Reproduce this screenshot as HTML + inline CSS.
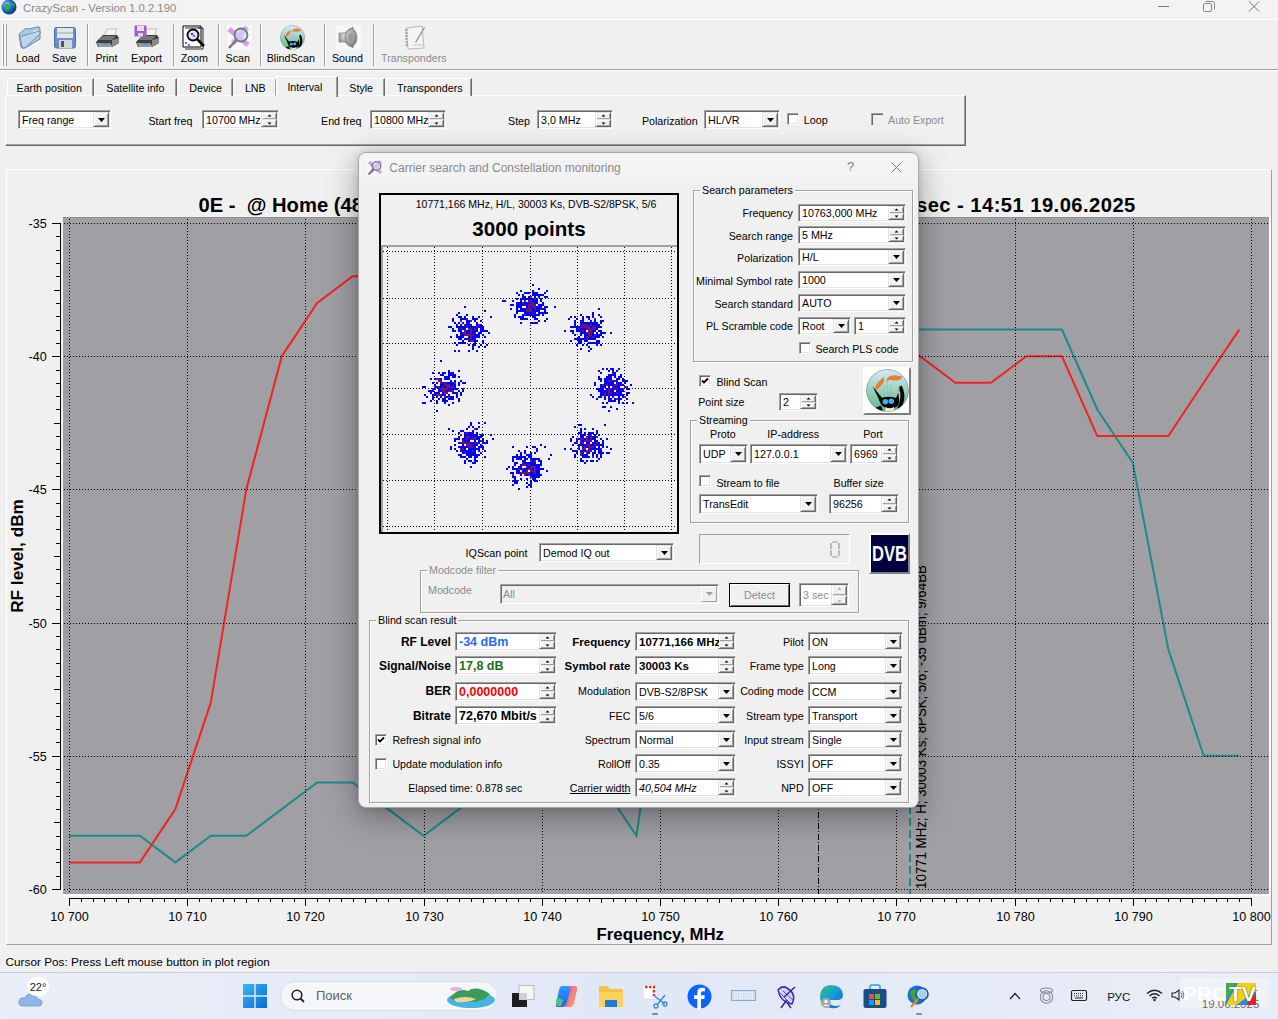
<!DOCTYPE html><html><head><meta charset="utf-8"><style>
html,body{margin:0;padding:0;width:1278px;height:1019px;overflow:hidden;background:#f0f0f0;font-family:"Liberation Sans", sans-serif;}
.t{position:absolute;white-space:nowrap;font-family:"Liberation Sans", sans-serif;}
.b{position:absolute;box-sizing:border-box;}
svg.b{overflow:visible}
</style></head><body>
<div class="b" style="left:0px;top:0px;width:1278px;height:19px;background:#f3f3f3"></div>
<svg class="b" style="left:1px;top:-1px" width="16" height="16"><defs><radialGradient id="gl" cx="35%" cy="35%" r="70%"><stop offset="0" stop-color="#9fd4ff"/><stop offset="0.5" stop-color="#1c6fc9"/><stop offset="1" stop-color="#0a3a80"/></radialGradient></defs><circle cx="8" cy="8" r="7.5" fill="url(#gl)"/><path d="M3 6Q5 4 7 5T9 8Q8 11 6 12Q4 10 3 6Z" fill="#3aa83a"/><path d="M10 3Q13 4 14 7Q12 8 11 6Z" fill="#3aa83a"/></svg>
<div class="t" style="top:0.5px;font-size:11.3px;line-height:14px;color:#8a8a8a;left:23.0px;">CrazyScan - Version 1.0.2.190</div>
<svg class="b" style="left:1150px;top:0" width="120" height="14"><path d="M8 6.5H19" stroke="#777" stroke-width="1"/><rect x="53.5" y="3.5" width="8" height="8" rx="1.5" fill="none" stroke="#888"/><path d="M55.5 1.5H62.5Q64.5 1.5 64.5 3.5V9.5" fill="none" stroke="#888"/><path d="M99 1.5L109 11.5M109 1.5L99 11.5" stroke="#777" stroke-width="1"/></svg>
<div class="b" style="left:0px;top:19px;width:1278px;height:1px;background:#fff"></div>
<div class="b" style="left:0px;top:69px;width:1278px;height:1px;background:#a0a0a0"></div>
<div class="b" style="left:0px;top:70px;width:1278px;height:1px;background:#fff"></div>
<div class="b" style="left:2px;top:24px;width:2px;height:42px;border-left:1px solid #fff;border-right:1px solid #a0a0a0"></div>
<div class="b" style="left:5px;top:24px;width:2px;height:42px;border-left:1px solid #fff;border-right:1px solid #a0a0a0"></div>
<div class="b" style="left:87px;top:24px;width:2px;height:42px;border-left:1px solid #a0a0a0;border-right:1px solid #fff"></div>
<div class="b" style="left:173px;top:24px;width:2px;height:42px;border-left:1px solid #a0a0a0;border-right:1px solid #fff"></div>
<div class="b" style="left:218px;top:24px;width:2px;height:42px;border-left:1px solid #a0a0a0;border-right:1px solid #fff"></div>
<div class="b" style="left:260px;top:24px;width:2px;height:42px;border-left:1px solid #a0a0a0;border-right:1px solid #fff"></div>
<div class="b" style="left:324px;top:24px;width:2px;height:42px;border-left:1px solid #a0a0a0;border-right:1px solid #fff"></div>
<div class="b" style="left:373px;top:24px;width:2px;height:42px;border-left:1px solid #a0a0a0;border-right:1px solid #fff"></div>
<div class="t" style="top:51.0px;font-size:10.7px;line-height:14px;color:#000;left:27.8px;transform:translateX(-50%);">Load</div>
<div class="t" style="top:51.0px;font-size:10.7px;line-height:14px;color:#000;left:64.3px;transform:translateX(-50%);">Save</div>
<div class="t" style="top:51.0px;font-size:10.7px;line-height:14px;color:#000;left:106.4px;transform:translateX(-50%);">Print</div>
<div class="t" style="top:51.0px;font-size:10.7px;line-height:14px;color:#000;left:146.5px;transform:translateX(-50%);">Export</div>
<div class="t" style="top:51.0px;font-size:10.7px;line-height:14px;color:#000;left:194.3px;transform:translateX(-50%);">Zoom</div>
<div class="t" style="top:51.0px;font-size:10.7px;line-height:14px;color:#000;left:237.8px;transform:translateX(-50%);">Scan</div>
<div class="t" style="top:51.0px;font-size:10.7px;line-height:14px;color:#000;left:290.8px;transform:translateX(-50%);">BlindScan</div>
<div class="t" style="top:51.0px;font-size:10.7px;line-height:14px;color:#000;left:347.4px;transform:translateX(-50%);">Sound</div>
<div class="t" style="top:51.0px;font-size:10.7px;line-height:14px;color:#8c8c8c;left:413.8px;transform:translateX(-50%);">Transponders</div>
<svg class="b" style="left:17px;top:25px" width="25" height="25" viewBox="0 0 25 25"><path d="M2 9L8 4Q10 3 12 4L20 2Q23 1 23 4L23 14L8 23Q5 24 4 22Z" fill="#a9c9e4" stroke="#6b8aa6" stroke-width="1"/><path d="M6 12L18 5Q21 4 22 6L10 14Z" fill="#fff" stroke="#9ab" stroke-width="0.6"/><path d="M3 13Q3 11 5 11L22 6Q24 6 23 9L9 22Q7 24 5 22Z" fill="#b9d6ee" stroke="#6d8ca8" stroke-width="1"/></svg>
<svg class="b" style="left:54px;top:27px" width="22" height="22" viewBox="0 0 22 22"><rect x="0.5" y="0.5" width="21" height="20.5" rx="2" fill="#6a8fd4" stroke="#5a6f8f"/><rect x="3" y="1" width="16" height="10" fill="#e2e6ea"/><rect x="3" y="5" width="16" height="2" fill="#b8c4d0"/><rect x="5" y="13" width="13" height="8" fill="#d6d6d6"/><rect x="7" y="14" width="3" height="6" fill="#555"/></svg>
<svg class="b" style="left:95px;top:28px" width="25" height="20" viewBox="0 0 25 20"><path d="M9 8L12 1H22L19 9Z" fill="#f4f4f4" stroke="#aaa" stroke-width="0.7"/><path d="M1 14L8 7H22L24 10V15L17 19H3Z" fill="#3d3d3d"/><path d="M3 12L8 8H21L17 12Z" fill="#777"/><path d="M2 15H15L18 19H4Z" fill="#9a9a9a"/><path d="M5 16L14 15L12 17Z" fill="#1e90ff"/><path d="M17 12L24 10V15L17 19Z" fill="#888"/></svg>
<svg class="b" style="left:135px;top:28px" width="25" height="20" viewBox="0 0 25 20"><path d="M9 8L12 1H22L19 9Z" fill="#f4f4f4" stroke="#aaa" stroke-width="0.7"/><path d="M1 14L8 7H22L24 10V15L17 19H3Z" fill="#3d3d3d"/><path d="M3 12L8 8H21L17 12Z" fill="#777"/><path d="M2 15H15L18 19H4Z" fill="#9a9a9a"/><path d="M5 16L14 15L12 17Z" fill="#1e90ff"/><path d="M17 12L24 10V15L17 19Z" fill="#888"/></svg>
<svg class="b" style="left:134px;top:25px" width="13" height="12" viewBox="0 0 13 12"><rect x="0.5" y="0.5" width="12" height="11" fill="#a45cc8"/><rect x="3" y="1" width="7" height="5" fill="#e8e0ee"/><rect x="4" y="8" width="5" height="3.5" fill="#d8d8d8"/></svg>
<svg class="b" style="left:182px;top:25px" width="26" height="26" viewBox="0 0 26 26"><path d="M1 1H19V22H1Z" fill="#fff" stroke="#000" stroke-width="1"/><path d="M3 3H21V24H3" fill="none" stroke="#000" stroke-width="0.8"/><circle cx="11" cy="10" r="5.5" fill="#dfe8ff" stroke="#000" stroke-width="1.8"/><path d="M15 14L22 21" stroke="#000" stroke-width="2.5"/><circle cx="10" cy="9" r="1.2" fill="#2a36ff"/><circle cx="12" cy="11" r="1" fill="#2a36ff"/><circle cx="4" cy="18" r="1" fill="#2a36ff"/><circle cx="7" cy="20" r="1" fill="#2a36ff"/><circle cx="17" cy="3" r="1" fill="#2a36ff"/></svg>
<svg class="b" style="left:227px;top:25px" width="25" height="25" viewBox="0 0 25 25"><rect x="0" y="0" width="25" height="25" fill="#f8f8f8"/><path d="M2 4L21 20" stroke="#d69cf0" stroke-width="5"/><path d="M20 2L6 18" stroke="#d69cf0" stroke-width="5" opacity="0.8"/><circle cx="14" cy="10" r="6.5" fill="#c8d8f0" fill-opacity="0.6" stroke="#777" stroke-width="1.8"/><path d="M9.5 15L2 23" stroke="#777" stroke-width="2.5"/></svg>
<svg class="b" style="left:280px;top:25px" width="25" height="25" viewBox="0 0 25 25"><g transform="scale(0.625)"><defs><linearGradient id="fl280" x1="0" y1="0" x2="0" y2="1"><stop offset="0" stop-color="#d2ecfb"/><stop offset="0.45" stop-color="#9fd4c4"/><stop offset="1" stop-color="#58b884"/></linearGradient><clipPath id="fc280"><circle cx="20" cy="20" r="19.5"/></clipPath></defs><circle cx="20" cy="20" r="19.5" fill="url(#fl280)" stroke="#666" stroke-width="0.5"/><g clip-path="url(#fc280)"><path d="M20 8Q25 4 32 7L34 6L33 9Q28 12 22 10L19 12Z" fill="#f07a3a"/><path d="M8 19Q9 13 15 9L16 7L17 11Q15 16 9 20Z" fill="#f07a3a"/><path d="M31 15Q34 18 33 22L30 21Z" fill="#f07a3a"/><path d="M6 16L15 27L13 30Z" fill="#000"/><path d="M12 28Q20 24 28 27L30 22L31 30Q30 37 22 37Q14 37 12 28Z" fill="#000"/><path d="M33 15Q38 24 34 34L31 38L29 36Q34 28 31 17Z" fill="#000"/><path d="M9 36L14 34L16 40H8Z" fill="#000"/><path d="M18 35Q22 38 26 35L26 41H18Z" fill="#f4f0b8"/><circle cx="18" cy="30.5" r="2.6" fill="#3ab0f0"/><circle cx="23.5" cy="30" r="2.6" fill="#3ab0f0"/><path d="M20 12V24M23 14V25M17 15V25" stroke="#8ab" stroke-width="0.6" opacity="0.6"/></g></g></svg>
<svg class="b" style="left:336px;top:25px" width="25" height="25" viewBox="0 0 25 25"><rect x="0" y="0" width="25" height="25" fill="#f8f8f8"/><defs><radialGradient id="spk" cx="40%" cy="40%" r="60%"><stop offset="0" stop-color="#e0e0e0"/><stop offset="1" stop-color="#7a7a7a"/></radialGradient></defs><path d="M3 8H9L17 2V23L9 17H3Z" fill="url(#spk)" stroke="#888" stroke-width="0.8"/><ellipse cx="15" cy="12.5" rx="6" ry="9" fill="url(#spk)" stroke="#888" stroke-width="0.8"/><ellipse cx="15" cy="12.5" rx="3" ry="5" fill="#9a9a9a"/></svg>
<svg class="b" style="left:403px;top:25px" width="26" height="25" viewBox="0 0 26 25"><path d="M3 3L19 1L21 23L5 24Z" fill="#f4f4f4" stroke="#aaa" stroke-width="0.8"/><path d="M2 5H5M2 8H5M2 11H5M2 14H5M2 17H5M2 20H5" stroke="#888" stroke-width="1"/><path d="M12 17L21 2L22 3L13 18Z" fill="#999"/><path d="M10 20H20" stroke="#bbb" stroke-width="0.8"/></svg>
<div class="b" style="left:5px;top:95px;width:961px;height:51px;border:1px solid;border-color:#fff #696969 #696969 #fff;box-shadow:inset -1px -1px #a0a0a0"></div>
<div class="b" style="left:7px;top:78px;width:87px;height:18px;border-top:1px solid #fff;border-left:1px solid #fff;border-right:1px solid #696969;box-shadow:inset -1px 0 #a0a0a0"></div>
<div class="t" style="top:81.0px;font-size:10.7px;line-height:14px;color:#000;left:16.5px;">Earth position</div>
<div class="b" style="left:94px;top:78px;width:83px;height:18px;border-top:1px solid #fff;border-left:1px solid #fff;border-right:1px solid #696969;box-shadow:inset -1px 0 #a0a0a0"></div>
<div class="t" style="top:81.0px;font-size:10.7px;line-height:14px;color:#000;left:106.3px;">Satellite info</div>
<div class="b" style="left:177px;top:78px;width:56px;height:18px;border-top:1px solid #fff;border-left:1px solid #fff;border-right:1px solid #696969;box-shadow:inset -1px 0 #a0a0a0"></div>
<div class="t" style="top:81.0px;font-size:10.7px;line-height:14px;color:#000;left:189.3px;">Device</div>
<div class="b" style="left:233px;top:78px;width:44px;height:18px;border-top:1px solid #fff;border-left:1px solid #fff;border-right:1px solid #696969;box-shadow:inset -1px 0 #a0a0a0"></div>
<div class="t" style="top:81.0px;font-size:10.7px;line-height:14px;color:#000;left:244.9px;">LNB</div>
<div class="b" style="left:337px;top:78px;width:48px;height:18px;border-top:1px solid #fff;border-left:1px solid #fff;border-right:1px solid #696969;box-shadow:inset -1px 0 #a0a0a0"></div>
<div class="t" style="top:81.0px;font-size:10.7px;line-height:14px;color:#000;left:349.3px;">Style</div>
<div class="b" style="left:385px;top:78px;width:87px;height:18px;border-top:1px solid #fff;border-left:1px solid #fff;border-right:1px solid #696969;box-shadow:inset -1px 0 #a0a0a0"></div>
<div class="t" style="top:81.0px;font-size:10.7px;line-height:14px;color:#000;left:397.0px;">Transponders</div>
<div class="b" style="left:276px;top:76px;width:62px;height:21px;background:#f0f0f0;border-top:1px solid #fff;border-left:1px solid #fff;border-right:1px solid #696969;box-shadow:inset -1px 0 #a0a0a0"></div>
<div class="t" style="top:80.0px;font-size:10.7px;line-height:14px;color:#000;left:287.4px;">Interval</div>
<div class="b" style="left:18px;top:110px;width:93px;height:19px;background:#fff;border:1px solid;border-color:#a0a0a0 #fff #fff #a0a0a0;box-shadow:inset 1px 1px #696969,inset -1px -1px #e3e3e3"></div>
<div class="b" style="left:93px;top:112px;width:16px;height:15px;background:#f0f0f0;border:1px solid;border-color:#e3e3e3 #696969 #696969 #e3e3e3;box-shadow:inset 1px 1px #fff,inset -1px -1px #a0a0a0"></div>
<svg class="b" style="left:97.5px;top:117.5px" width="7" height="4"><path d="M0 0H7L3.5 4Z" fill="#000"/></svg>
<div class="t" style="top:112.5px;font-size:10.7px;line-height:14px;color:#000;left:22.0px;">Freq range</div>
<div class="t" style="top:113.5px;font-size:10.7px;line-height:14px;color:#000;left:148.4px;">Start freq</div>
<div class="b" style="left:202px;top:110px;width:77px;height:19px;background:#fff;border:1px solid;border-color:#a0a0a0 #fff #fff #a0a0a0;box-shadow:inset 1px 1px #696969,inset -1px -1px #e3e3e3"></div>
<div class="b" style="left:261px;top:112px;width:16px;height:8px;background:#f0f0f0;border:1px solid;border-color:#e3e3e3 #696969 #696969 #e3e3e3;box-shadow:inset 1px 1px #fff,inset -1px -1px #a0a0a0"></div>
<div class="b" style="left:261px;top:119px;width:16px;height:8px;background:#f0f0f0;border:1px solid;border-color:#e3e3e3 #696969 #696969 #e3e3e3;box-shadow:inset 1px 1px #fff,inset -1px -1px #a0a0a0"></div>
<svg class="b" style="left:267px;top:114px" width="5" height="11"><path d="M2.5 0.5L4.5 2.5H0.5Z" fill="#000"/><path d="M0.5 8.5H4.5L2.5 10.5Z" fill="#000"/></svg>
<div class="t" style="top:112.5px;font-size:10.7px;line-height:14px;color:#000;left:206.0px;">10700 MHz</div>
<div class="t" style="top:113.5px;font-size:10.7px;line-height:14px;color:#000;left:321.0px;">End freq</div>
<div class="b" style="left:370px;top:110px;width:76px;height:19px;background:#fff;border:1px solid;border-color:#a0a0a0 #fff #fff #a0a0a0;box-shadow:inset 1px 1px #696969,inset -1px -1px #e3e3e3"></div>
<div class="b" style="left:428px;top:112px;width:16px;height:8px;background:#f0f0f0;border:1px solid;border-color:#e3e3e3 #696969 #696969 #e3e3e3;box-shadow:inset 1px 1px #fff,inset -1px -1px #a0a0a0"></div>
<div class="b" style="left:428px;top:119px;width:16px;height:8px;background:#f0f0f0;border:1px solid;border-color:#e3e3e3 #696969 #696969 #e3e3e3;box-shadow:inset 1px 1px #fff,inset -1px -1px #a0a0a0"></div>
<svg class="b" style="left:434px;top:114px" width="5" height="11"><path d="M2.5 0.5L4.5 2.5H0.5Z" fill="#000"/><path d="M0.5 8.5H4.5L2.5 10.5Z" fill="#000"/></svg>
<div class="t" style="top:112.5px;font-size:10.7px;line-height:14px;color:#000;left:374.0px;">10800 MHz</div>
<div class="t" style="top:113.5px;font-size:10.7px;line-height:14px;color:#000;left:508.0px;">Step</div>
<div class="b" style="left:537px;top:110px;width:76px;height:19px;background:#fff;border:1px solid;border-color:#a0a0a0 #fff #fff #a0a0a0;box-shadow:inset 1px 1px #696969,inset -1px -1px #e3e3e3"></div>
<div class="b" style="left:595px;top:112px;width:16px;height:8px;background:#f0f0f0;border:1px solid;border-color:#e3e3e3 #696969 #696969 #e3e3e3;box-shadow:inset 1px 1px #fff,inset -1px -1px #a0a0a0"></div>
<div class="b" style="left:595px;top:119px;width:16px;height:8px;background:#f0f0f0;border:1px solid;border-color:#e3e3e3 #696969 #696969 #e3e3e3;box-shadow:inset 1px 1px #fff,inset -1px -1px #a0a0a0"></div>
<svg class="b" style="left:601px;top:114px" width="5" height="11"><path d="M2.5 0.5L4.5 2.5H0.5Z" fill="#000"/><path d="M0.5 8.5H4.5L2.5 10.5Z" fill="#000"/></svg>
<div class="t" style="top:112.5px;font-size:10.7px;line-height:14px;color:#000;left:541.0px;">3,0 MHz</div>
<div class="t" style="top:113.5px;font-size:10.7px;line-height:14px;color:#000;left:641.9px;">Polarization</div>
<div class="b" style="left:704px;top:110px;width:76px;height:19px;background:#fff;border:1px solid;border-color:#a0a0a0 #fff #fff #a0a0a0;box-shadow:inset 1px 1px #696969,inset -1px -1px #e3e3e3"></div>
<div class="b" style="left:762px;top:112px;width:16px;height:15px;background:#f0f0f0;border:1px solid;border-color:#e3e3e3 #696969 #696969 #e3e3e3;box-shadow:inset 1px 1px #fff,inset -1px -1px #a0a0a0"></div>
<svg class="b" style="left:766.5px;top:117.5px" width="7" height="4"><path d="M0 0H7L3.5 4Z" fill="#000"/></svg>
<div class="t" style="top:112.5px;font-size:10.7px;line-height:14px;color:#000;left:708.0px;">HL/VR</div>
<div class="b" style="left:787px;top:113px;width:12px;height:12px;background:#fff;border:1px solid;border-color:#a0a0a0 #fff #fff #a0a0a0;box-shadow:inset 1px 1px #696969,inset -1px -1px #e3e3e3"></div>
<div class="t" style="top:112.5px;font-size:10.7px;line-height:14px;color:#000;left:803.8px;">Loop</div>
<div class="b" style="left:871px;top:113px;width:12px;height:12px;border-top:1px solid #a0a0a0;border-left:1px solid #a0a0a0;box-shadow:inset 1px 1px #696969"></div>
<div class="t" style="top:112.5px;font-size:10.7px;line-height:14px;color:#8c8c8c;left:888.0px;">Auto Export</div>
<div class="b" style="left:6px;top:169px;width:1266px;height:776px;border:1px solid;border-color:#fff #a0a0a0 #a0a0a0 #fff"></div>
<svg class="b" style="left:0;top:0" width="1278" height="1019" shape-rendering="crispEdges"><rect x="63" y="217" width="1206" height="677" fill="#a09fa4"/><rect x="63" y="217" width="1206" height="1" fill="#8f8e93"/><rect x="63" y="894" width="1208" height="2" fill="#ffffff"/><rect x="1269" y="217" width="2" height="679" fill="#ffffff"/><polyline points="69.0,835.7 104.5,835.7 139.9,835.7 175.4,862.4 210.8,835.7 246.3,835.7 281.8,809.1 317.2,782.4 352.7,782.4 388.1,809.1 423.6,835.7 459.1,809.1 494.5,782.4 530.0,755.8 565.4,622.6 600.9,782.4 636.4,835.7 671.8,596.0 707.3,409.5 742.7,356.2 778.2,329.6 813.7,329.6 849.1,329.6 884.6,329.6 920.0,329.6 955.5,329.6 991.0,329.6 1026.4,329.6 1061.9,329.6 1097.3,409.5 1132.8,462.8 1168.3,649.2 1203.7,755.8 1239.2,755.8" fill="none" stroke="#1e8a8a" stroke-width="2" shape-rendering="geometricPrecision" stroke-linejoin="miter"/><polyline points="69.0,862.4 104.5,862.4 139.9,862.4 175.4,809.1 210.8,702.5 246.3,489.4 281.8,356.2 317.2,302.9 352.7,276.3 388.1,276.3 423.6,276.3 459.1,276.3 494.5,276.3 530.0,276.3 565.4,276.3 600.9,276.3 636.4,302.9 671.8,302.9 707.3,302.9 742.7,302.9 778.2,302.9 813.7,302.9 849.1,302.9 884.6,329.6 920.0,356.2 955.5,382.8 991.0,382.8 1026.4,356.2 1061.9,356.2 1097.3,436.1 1132.8,436.1 1168.3,436.1 1203.7,382.8 1239.2,329.6" fill="none" stroke="#f02222" stroke-width="2" shape-rendering="geometricPrecision" stroke-linejoin="miter"/><line x1="818.5" y1="218" x2="818.5" y2="894" stroke="#000" stroke-width="1" stroke-dasharray="6 2 1 2"/><line x1="910" y1="218" x2="910" y2="894" stroke="#1e8a8a" stroke-width="2" stroke-dasharray="8 4"/><text x="0" y="0" transform="translate(925.9,889) rotate(-90) scale(0.92,1)" font-family="Liberation Sans" font-size="14.5" fill="#000" shape-rendering="geometricPrecision" textLength="352" lengthAdjust="spacingAndGlyphs">10771 MHz; H; 30003 Ks; 8PSK; 5/6; -35 dBm; 9/64BB</text><line x1="69.5" y1="219" x2="69.5" y2="894" stroke="#000" stroke-width="1" stroke-dasharray="1 2"/><line x1="187.5" y1="219" x2="187.5" y2="894" stroke="#000" stroke-width="1" stroke-dasharray="1 2"/><line x1="305.5" y1="219" x2="305.5" y2="894" stroke="#000" stroke-width="1" stroke-dasharray="1 2"/><line x1="424.5" y1="219" x2="424.5" y2="894" stroke="#000" stroke-width="1" stroke-dasharray="1 2"/><line x1="542.5" y1="219" x2="542.5" y2="894" stroke="#000" stroke-width="1" stroke-dasharray="1 2"/><line x1="660.5" y1="219" x2="660.5" y2="894" stroke="#000" stroke-width="1" stroke-dasharray="1 2"/><line x1="778.5" y1="219" x2="778.5" y2="894" stroke="#000" stroke-width="1" stroke-dasharray="1 2"/><line x1="896.5" y1="219" x2="896.5" y2="894" stroke="#000" stroke-width="1" stroke-dasharray="1 2"/><line x1="1015.5" y1="219" x2="1015.5" y2="894" stroke="#000" stroke-width="1" stroke-dasharray="1 2"/><line x1="1133.5" y1="219" x2="1133.5" y2="894" stroke="#000" stroke-width="1" stroke-dasharray="1 2"/><line x1="1251.5" y1="219" x2="1251.5" y2="894" stroke="#000" stroke-width="1" stroke-dasharray="1 2"/><line x1="64" y1="223.5" x2="1268" y2="223.5" stroke="#000" stroke-width="1" stroke-dasharray="1 2"/><line x1="64" y1="356.5" x2="1268" y2="356.5" stroke="#000" stroke-width="1" stroke-dasharray="1 2"/><line x1="64" y1="489.5" x2="1268" y2="489.5" stroke="#000" stroke-width="1" stroke-dasharray="1 2"/><line x1="64" y1="623.5" x2="1268" y2="623.5" stroke="#000" stroke-width="1" stroke-dasharray="1 2"/><line x1="64" y1="756.5" x2="1268" y2="756.5" stroke="#000" stroke-width="1" stroke-dasharray="1 2"/><line x1="64" y1="889.5" x2="1268" y2="889.5" stroke="#000" stroke-width="1" stroke-dasharray="1 2"/><rect x="60" y="223" width="1" height="667" fill="#000"/><rect x="52" y="223" width="8" height="1" fill="#000"/><rect x="56" y="236" width="4" height="1" fill="#000"/><rect x="56" y="250" width="4" height="1" fill="#000"/><rect x="56" y="263" width="4" height="1" fill="#000"/><rect x="56" y="276" width="4" height="1" fill="#000"/><rect x="54" y="290" width="6" height="1" fill="#000"/><rect x="56" y="303" width="4" height="1" fill="#000"/><rect x="56" y="316" width="4" height="1" fill="#000"/><rect x="56" y="330" width="4" height="1" fill="#000"/><rect x="56" y="343" width="4" height="1" fill="#000"/><rect x="52" y="356" width="8" height="1" fill="#000"/><rect x="56" y="370" width="4" height="1" fill="#000"/><rect x="56" y="383" width="4" height="1" fill="#000"/><rect x="56" y="396" width="4" height="1" fill="#000"/><rect x="56" y="409" width="4" height="1" fill="#000"/><rect x="54" y="423" width="6" height="1" fill="#000"/><rect x="56" y="436" width="4" height="1" fill="#000"/><rect x="56" y="449" width="4" height="1" fill="#000"/><rect x="56" y="463" width="4" height="1" fill="#000"/><rect x="56" y="476" width="4" height="1" fill="#000"/><rect x="52" y="489" width="8" height="1" fill="#000"/><rect x="56" y="503" width="4" height="1" fill="#000"/><rect x="56" y="516" width="4" height="1" fill="#000"/><rect x="56" y="529" width="4" height="1" fill="#000"/><rect x="56" y="543" width="4" height="1" fill="#000"/><rect x="54" y="556" width="6" height="1" fill="#000"/><rect x="56" y="569" width="4" height="1" fill="#000"/><rect x="56" y="583" width="4" height="1" fill="#000"/><rect x="56" y="596" width="4" height="1" fill="#000"/><rect x="56" y="609" width="4" height="1" fill="#000"/><rect x="52" y="623" width="8" height="1" fill="#000"/><rect x="56" y="636" width="4" height="1" fill="#000"/><rect x="56" y="649" width="4" height="1" fill="#000"/><rect x="56" y="663" width="4" height="1" fill="#000"/><rect x="56" y="676" width="4" height="1" fill="#000"/><rect x="54" y="689" width="6" height="1" fill="#000"/><rect x="56" y="703" width="4" height="1" fill="#000"/><rect x="56" y="716" width="4" height="1" fill="#000"/><rect x="56" y="729" width="4" height="1" fill="#000"/><rect x="56" y="742" width="4" height="1" fill="#000"/><rect x="52" y="756" width="8" height="1" fill="#000"/><rect x="56" y="769" width="4" height="1" fill="#000"/><rect x="56" y="782" width="4" height="1" fill="#000"/><rect x="56" y="796" width="4" height="1" fill="#000"/><rect x="56" y="809" width="4" height="1" fill="#000"/><rect x="54" y="822" width="6" height="1" fill="#000"/><rect x="56" y="836" width="4" height="1" fill="#000"/><rect x="56" y="849" width="4" height="1" fill="#000"/><rect x="56" y="862" width="4" height="1" fill="#000"/><rect x="56" y="876" width="4" height="1" fill="#000"/><rect x="52" y="889" width="8" height="1" fill="#000"/><rect x="69" y="898" width="1183" height="1" fill="#000"/><rect x="69" y="898" width="1" height="8" fill="#000"/><rect x="81" y="898" width="1" height="4" fill="#000"/><rect x="93" y="898" width="1" height="4" fill="#000"/><rect x="104" y="898" width="1" height="4" fill="#000"/><rect x="116" y="898" width="1" height="4" fill="#000"/><rect x="128" y="898" width="1" height="5" fill="#000"/><rect x="140" y="898" width="1" height="4" fill="#000"/><rect x="152" y="898" width="1" height="4" fill="#000"/><rect x="164" y="898" width="1" height="4" fill="#000"/><rect x="175" y="898" width="1" height="4" fill="#000"/><rect x="187" y="898" width="1" height="8" fill="#000"/><rect x="199" y="898" width="1" height="4" fill="#000"/><rect x="211" y="898" width="1" height="4" fill="#000"/><rect x="223" y="898" width="1" height="4" fill="#000"/><rect x="234" y="898" width="1" height="4" fill="#000"/><rect x="246" y="898" width="1" height="5" fill="#000"/><rect x="258" y="898" width="1" height="4" fill="#000"/><rect x="270" y="898" width="1" height="4" fill="#000"/><rect x="282" y="898" width="1" height="4" fill="#000"/><rect x="294" y="898" width="1" height="4" fill="#000"/><rect x="305" y="898" width="1" height="8" fill="#000"/><rect x="317" y="898" width="1" height="4" fill="#000"/><rect x="329" y="898" width="1" height="4" fill="#000"/><rect x="341" y="898" width="1" height="4" fill="#000"/><rect x="353" y="898" width="1" height="4" fill="#000"/><rect x="365" y="898" width="1" height="5" fill="#000"/><rect x="376" y="898" width="1" height="4" fill="#000"/><rect x="388" y="898" width="1" height="4" fill="#000"/><rect x="400" y="898" width="1" height="4" fill="#000"/><rect x="412" y="898" width="1" height="4" fill="#000"/><rect x="424" y="898" width="1" height="8" fill="#000"/><rect x="435" y="898" width="1" height="4" fill="#000"/><rect x="447" y="898" width="1" height="4" fill="#000"/><rect x="459" y="898" width="1" height="4" fill="#000"/><rect x="471" y="898" width="1" height="4" fill="#000"/><rect x="483" y="898" width="1" height="5" fill="#000"/><rect x="495" y="898" width="1" height="4" fill="#000"/><rect x="506" y="898" width="1" height="4" fill="#000"/><rect x="518" y="898" width="1" height="4" fill="#000"/><rect x="530" y="898" width="1" height="4" fill="#000"/><rect x="542" y="898" width="1" height="8" fill="#000"/><rect x="554" y="898" width="1" height="4" fill="#000"/><rect x="565" y="898" width="1" height="4" fill="#000"/><rect x="577" y="898" width="1" height="4" fill="#000"/><rect x="589" y="898" width="1" height="4" fill="#000"/><rect x="601" y="898" width="1" height="5" fill="#000"/><rect x="613" y="898" width="1" height="4" fill="#000"/><rect x="625" y="898" width="1" height="4" fill="#000"/><rect x="636" y="898" width="1" height="4" fill="#000"/><rect x="648" y="898" width="1" height="4" fill="#000"/><rect x="660" y="898" width="1" height="8" fill="#000"/><rect x="672" y="898" width="1" height="4" fill="#000"/><rect x="684" y="898" width="1" height="4" fill="#000"/><rect x="695" y="898" width="1" height="4" fill="#000"/><rect x="707" y="898" width="1" height="4" fill="#000"/><rect x="719" y="898" width="1" height="5" fill="#000"/><rect x="731" y="898" width="1" height="4" fill="#000"/><rect x="743" y="898" width="1" height="4" fill="#000"/><rect x="755" y="898" width="1" height="4" fill="#000"/><rect x="766" y="898" width="1" height="4" fill="#000"/><rect x="778" y="898" width="1" height="8" fill="#000"/><rect x="790" y="898" width="1" height="4" fill="#000"/><rect x="802" y="898" width="1" height="4" fill="#000"/><rect x="814" y="898" width="1" height="4" fill="#000"/><rect x="825" y="898" width="1" height="4" fill="#000"/><rect x="837" y="898" width="1" height="5" fill="#000"/><rect x="849" y="898" width="1" height="4" fill="#000"/><rect x="861" y="898" width="1" height="4" fill="#000"/><rect x="873" y="898" width="1" height="4" fill="#000"/><rect x="885" y="898" width="1" height="4" fill="#000"/><rect x="896" y="898" width="1" height="8" fill="#000"/><rect x="908" y="898" width="1" height="4" fill="#000"/><rect x="920" y="898" width="1" height="4" fill="#000"/><rect x="932" y="898" width="1" height="4" fill="#000"/><rect x="944" y="898" width="1" height="4" fill="#000"/><rect x="956" y="898" width="1" height="5" fill="#000"/><rect x="967" y="898" width="1" height="4" fill="#000"/><rect x="979" y="898" width="1" height="4" fill="#000"/><rect x="991" y="898" width="1" height="4" fill="#000"/><rect x="1003" y="898" width="1" height="4" fill="#000"/><rect x="1015" y="898" width="1" height="8" fill="#000"/><rect x="1026" y="898" width="1" height="4" fill="#000"/><rect x="1038" y="898" width="1" height="4" fill="#000"/><rect x="1050" y="898" width="1" height="4" fill="#000"/><rect x="1062" y="898" width="1" height="4" fill="#000"/><rect x="1074" y="898" width="1" height="5" fill="#000"/><rect x="1086" y="898" width="1" height="4" fill="#000"/><rect x="1097" y="898" width="1" height="4" fill="#000"/><rect x="1109" y="898" width="1" height="4" fill="#000"/><rect x="1121" y="898" width="1" height="4" fill="#000"/><rect x="1133" y="898" width="1" height="8" fill="#000"/><rect x="1145" y="898" width="1" height="4" fill="#000"/><rect x="1156" y="898" width="1" height="4" fill="#000"/><rect x="1168" y="898" width="1" height="4" fill="#000"/><rect x="1180" y="898" width="1" height="4" fill="#000"/><rect x="1192" y="898" width="1" height="5" fill="#000"/><rect x="1204" y="898" width="1" height="4" fill="#000"/><rect x="1216" y="898" width="1" height="4" fill="#000"/><rect x="1227" y="898" width="1" height="4" fill="#000"/><rect x="1239" y="898" width="1" height="4" fill="#000"/><rect x="1251" y="898" width="1" height="8" fill="#000"/></svg>
<div class="t" style="top:217.2px;font-size:12.6px;line-height:14px;color:#000;right:1231.3px;">-35</div>
<div class="t" style="top:350.2px;font-size:12.6px;line-height:14px;color:#000;right:1231.3px;">-40</div>
<div class="t" style="top:483.2px;font-size:12.6px;line-height:14px;color:#000;right:1231.3px;">-45</div>
<div class="t" style="top:617.2px;font-size:12.6px;line-height:14px;color:#000;right:1231.3px;">-50</div>
<div class="t" style="top:750.2px;font-size:12.6px;line-height:14px;color:#000;right:1231.3px;">-55</div>
<div class="t" style="top:883.2px;font-size:12.6px;line-height:14px;color:#000;right:1231.3px;">-60</div>
<div class="t" style="top:909.5px;font-size:12.6px;line-height:14px;color:#000;left:69.5px;transform:translateX(-50%);">10 700</div>
<div class="t" style="top:909.5px;font-size:12.6px;line-height:14px;color:#000;left:187.5px;transform:translateX(-50%);">10 710</div>
<div class="t" style="top:909.5px;font-size:12.6px;line-height:14px;color:#000;left:305.5px;transform:translateX(-50%);">10 720</div>
<div class="t" style="top:909.5px;font-size:12.6px;line-height:14px;color:#000;left:424.5px;transform:translateX(-50%);">10 730</div>
<div class="t" style="top:909.5px;font-size:12.6px;line-height:14px;color:#000;left:542.5px;transform:translateX(-50%);">10 740</div>
<div class="t" style="top:909.5px;font-size:12.6px;line-height:14px;color:#000;left:660.5px;transform:translateX(-50%);">10 750</div>
<div class="t" style="top:909.5px;font-size:12.6px;line-height:14px;color:#000;left:778.5px;transform:translateX(-50%);">10 760</div>
<div class="t" style="top:909.5px;font-size:12.6px;line-height:14px;color:#000;left:896.5px;transform:translateX(-50%);">10 770</div>
<div class="t" style="top:909.5px;font-size:12.6px;line-height:14px;color:#000;left:1015.5px;transform:translateX(-50%);">10 780</div>
<div class="t" style="top:909.5px;font-size:12.6px;line-height:14px;color:#000;left:1133.5px;transform:translateX(-50%);">10 790</div>
<div class="t" style="top:909.5px;font-size:12.6px;line-height:14px;color:#000;left:1251.5px;transform:translateX(-50%);">10 800</div>
<div class="t" style="top:926.0px;font-size:16.8px;line-height:18px;color:#000;font-weight:700;left:660.3px;transform:translateX(-50%);">Frequency, MHz</div>
<div class="t" style="left:17px;top:556px;font-size:17.2px;line-height:18px;font-weight:700;transform:translate(-50%,-50%) rotate(-90deg)">RF level, dBm</div>
<div class="t" style="top:194.0px;font-size:20.2px;line-height:22px;color:#000;font-weight:700;left:198.5px;">0E -&nbsp; @ Home (48.46N, 35.04E) - Scan time 39.1</div>
<div class="t" style="top:194.0px;font-size:20.2px;line-height:22px;color:#000;font-weight:700;right:142.2px;letter-spacing:0.45px">sec - 14:51 19.06.2025</div>
<div class="t" style="top:955.0px;font-size:11.8px;line-height:14px;color:#000;left:5.5px;">Cursor Pos: Press Left mouse button in plot region</div>
<div class="b" style="left:358px;top:152px;width:561px;height:656px;background:#f0f0f0;border:1px solid #a8a8a8;border-radius:8px;box-shadow:0 8px 32px rgba(0,0,0,0.36),0 0 6px rgba(0,0,0,0.12)"></div>
<div class="b" style="left:359px;top:153px;width:559px;height:30px;background:#f3f3f3;border-radius:7px 7px 0 0"></div>
<svg class="b" style="left:367px;top:159px" width="17" height="17" viewBox="0 0 17 17"><rect width="17" height="17" fill="#f8f8f8"/><path d="M2 3L14 14" stroke="#d69cf0" stroke-width="3.5"/><path d="M14 2L4 13" stroke="#d69cf0" stroke-width="3.5" opacity="0.8"/><circle cx="9.5" cy="7" r="4.3" fill="#c8d8f0" fill-opacity="0.6" stroke="#777" stroke-width="1.3"/><path d="M6.5 10.5L1.5 15.5" stroke="#777" stroke-width="1.8"/></svg>
<div class="t" style="top:160.6px;font-size:12px;line-height:14px;color:#8a8a8a;left:389.3px;">Carrier search and Constellation monitoring</div>
<div class="t" style="top:159.7px;font-size:13px;line-height:14px;color:#808080;left:850.7px;transform:translateX(-50%);">?</div>
<svg class="b" style="left:891px;top:162px" width="11" height="11" viewBox="0 0 11 11"><path d="M0.5 0.5L10.5 10.5M10.5 0.5L0.5 10.5" stroke="#777" stroke-width="1"/></svg>
<div class="b" style="left:379px;top:193px;width:300px;height:341px;border:2px solid #000;background:#f0f0f0"></div>
<div class="t" style="top:197.0px;font-size:10.5px;line-height:14px;color:#000;left:536.0px;transform:translateX(-50%);">10771,166 MHz, H/L, 30003 Ks, DVB-S2/8PSK, 5/6</div>
<div class="t" style="top:218.0px;font-size:20.6px;line-height:22px;color:#000;font-weight:700;left:529.0px;transform:translateX(-50%);">3000 points</div>
<div class="b" style="left:381px;top:245px;width:296px;height:287px;border-top:2px solid #a0a0a0;border-left:2px solid #a0a0a0"></div>
<svg class="b" style="left:0;top:0" width="1278" height="1019" shape-rendering="crispEdges"><line x1="387.5" y1="247" x2="387.5" y2="530" stroke="#000" stroke-width="1" stroke-dasharray="1 2"/><line x1="434.5" y1="247" x2="434.5" y2="530" stroke="#000" stroke-width="1" stroke-dasharray="1 2"/><line x1="482.5" y1="247" x2="482.5" y2="530" stroke="#000" stroke-width="1" stroke-dasharray="1 2"/><line x1="530.5" y1="247" x2="530.5" y2="530" stroke="#000" stroke-width="1" stroke-dasharray="1 2"/><line x1="577.5" y1="247" x2="577.5" y2="530" stroke="#000" stroke-width="1" stroke-dasharray="1 2"/><line x1="624.5" y1="247" x2="624.5" y2="530" stroke="#000" stroke-width="1" stroke-dasharray="1 2"/><line x1="671.5" y1="247" x2="671.5" y2="530" stroke="#000" stroke-width="1" stroke-dasharray="1 2"/><line x1="383" y1="251.5" x2="675" y2="251.5" stroke="#000" stroke-width="1" stroke-dasharray="1 2"/><line x1="383" y1="298.5" x2="675" y2="298.5" stroke="#000" stroke-width="1" stroke-dasharray="1 2"/><line x1="383" y1="343.5" x2="675" y2="343.5" stroke="#000" stroke-width="1" stroke-dasharray="1 2"/><line x1="383" y1="388.5" x2="675" y2="388.5" stroke="#000" stroke-width="1" stroke-dasharray="1 2"/><line x1="383" y1="434.5" x2="675" y2="434.5" stroke="#000" stroke-width="1" stroke-dasharray="1 2"/><line x1="383" y1="480.5" x2="675" y2="480.5" stroke="#000" stroke-width="1" stroke-dasharray="1 2"/><line x1="383" y1="526.5" x2="675" y2="526.5" stroke="#000" stroke-width="1" stroke-dasharray="1 2"/><path d="M604 386h2v2h-2zM596 448h2v2h-2zM536 468h2v2h-2zM472 444h2v2h-2zM430 392h2v2h-2zM516 292h2v2h-2zM592 438h2v2h-2zM464 456h2v2h-2zM592 332h2v2h-2zM584 454h2v2h-2zM472 432h2v2h-2zM452 328h2v2h-2zM592 330h2v2h-2zM600 394h2v2h-2zM592 452h2v2h-2zM538 470h2v2h-2zM470 432h2v2h-2zM448 382h2v2h-2zM466 320h2v2h-2zM598 314h2v2h-2zM600 390h2v2h-2zM598 448h2v2h-2zM512 446h2v2h-2zM472 436h2v2h-2zM478 332h2v2h-2zM532 310h2v2h-2zM600 334h2v2h-2zM574 454h2v2h-2zM454 438h2v2h-2zM520 318h2v2h-2zM614 392h2v2h-2zM588 452h2v2h-2zM480 326h2v2h-2zM518 306h2v2h-2zM624 380h2v2h-2zM598 434h2v2h-2zM478 450h2v2h-2zM618 392h2v2h-2zM602 446h2v2h-2zM468 450h2v2h-2zM484 310h2v2h-2zM520 308h2v2h-2zM546 470h2v2h-2zM448 326h2v2h-2zM538 296h2v2h-2zM618 400h2v2h-2zM574 442h2v2h-2zM478 422h2v2h-2zM452 376h2v2h-2zM474 318h2v2h-2zM532 316h2v2h-2zM618 388h2v2h-2zM586 456h2v2h-2zM536 464h2v2h-2zM490 434h2v2h-2zM452 384h2v2h-2zM576 318h2v2h-2zM616 380h2v2h-2zM580 432h2v2h-2zM538 472h2v2h-2zM480 436h2v2h-2zM444 378h2v2h-2zM474 342h2v2h-2zM522 318h2v2h-2zM596 398h2v2h-2zM480 434h2v2h-2zM452 398h2v2h-2zM480 328h2v2h-2zM570 440h2v2h-2zM512 472h2v2h-2zM530 314h2v2h-2zM598 342h2v2h-2zM606 394h2v2h-2zM572 436h2v2h-2zM544 306h2v2h-2zM592 338h2v2h-2zM610 378h2v2h-2zM582 452h2v2h-2zM514 462h2v2h-2zM476 448h2v2h-2zM518 302h2v2h-2zM606 382h2v2h-2zM576 442h2v2h-2zM518 470h2v2h-2zM450 446h2v2h-2zM438 372h2v2h-2zM512 300h2v2h-2zM590 326h2v2h-2zM618 394h2v2h-2zM472 426h2v2h-2zM450 396h2v2h-2zM544 292h2v2h-2zM590 348h2v2h-2zM602 442h2v2h-2zM532 474h2v2h-2zM522 304h2v2h-2zM594 330h2v2h-2zM606 380h2v2h-2zM608 452h2v2h-2zM532 446h2v2h-2zM474 446h2v2h-2zM458 390h2v2h-2zM514 314h2v2h-2zM622 402h2v2h-2zM576 438h2v2h-2zM460 394h2v2h-2zM542 314h2v2h-2zM602 336h2v2h-2zM606 390h2v2h-2zM570 438h2v2h-2zM528 312h2v2h-2zM588 324h2v2h-2zM586 446h2v2h-2zM468 432h2v2h-2zM448 394h2v2h-2zM472 328h2v2h-2zM572 330h2v2h-2zM578 424h2v2h-2zM520 478h2v2h-2zM438 390h2v2h-2zM472 332h2v2h-2zM542 312h2v2h-2zM626 394h2v2h-2zM466 452h2v2h-2zM468 350h2v2h-2zM540 304h2v2h-2zM588 350h2v2h-2zM610 394h2v2h-2zM472 452h2v2h-2zM476 334h2v2h-2zM604 382h2v2h-2zM588 432h2v2h-2zM524 450h2v2h-2zM464 448h2v2h-2zM544 310h2v2h-2zM596 322h2v2h-2zM610 374h2v2h-2zM594 452h2v2h-2zM512 466h2v2h-2zM430 378h2v2h-2zM464 318h2v2h-2zM576 440h2v2h-2zM520 458h2v2h-2zM448 374h2v2h-2zM460 330h2v2h-2zM618 390h2v2h-2zM526 446h2v2h-2zM612 380h2v2h-2zM464 432h2v2h-2zM526 306h2v2h-2zM630 384h2v2h-2zM596 444h2v2h-2zM536 448h2v2h-2zM462 444h2v2h-2zM448 404h2v2h-2zM536 314h2v2h-2zM616 378h2v2h-2zM530 482h2v2h-2zM534 312h2v2h-2zM582 344h2v2h-2zM626 388h2v2h-2zM538 460h2v2h-2zM438 392h2v2h-2zM480 330h2v2h-2zM524 312h2v2h-2zM584 462h2v2h-2zM430 400h2v2h-2zM480 320h2v2h-2zM518 294h2v2h-2zM596 326h2v2h-2zM612 384h2v2h-2zM528 456h2v2h-2zM526 318h2v2h-2zM608 382h2v2h-2zM580 442h2v2h-2zM474 460h2v2h-2zM490 316h2v2h-2zM610 390h2v2h-2zM512 460h2v2h-2zM468 434h2v2h-2zM436 392h2v2h-2zM536 308h2v2h-2zM602 388h2v2h-2zM458 382h2v2h-2zM542 308h2v2h-2zM594 324h2v2h-2zM612 388h2v2h-2zM574 456h2v2h-2zM534 452h2v2h-2zM474 442h2v2h-2zM458 328h2v2h-2zM542 302h2v2h-2zM580 320h2v2h-2zM602 390h2v2h-2zM530 484h2v2h-2zM464 438h2v2h-2zM532 308h2v2h-2zM450 380h2v2h-2zM542 304h2v2h-2zM600 388h2v2h-2zM582 446h2v2h-2zM518 450h2v2h-2zM534 294h2v2h-2zM618 386h2v2h-2zM530 480h2v2h-2zM464 462h2v2h-2zM520 290h2v2h-2zM616 408h2v2h-2zM482 434h2v2h-2zM440 360h2v2h-2zM536 322h2v2h-2zM528 466h2v2h-2zM590 322h2v2h-2zM620 390h2v2h-2zM530 474h2v2h-2zM470 442h2v2h-2zM432 394h2v2h-2zM612 370h2v2h-2zM584 450h2v2h-2zM538 464h2v2h-2zM468 456h2v2h-2zM442 392h2v2h-2zM482 330h2v2h-2zM540 300h2v2h-2zM612 396h2v2h-2zM606 438h2v2h-2zM522 470h2v2h-2zM460 446h2v2h-2zM472 318h2v2h-2zM536 294h2v2h-2zM532 478h2v2h-2zM454 388h2v2h-2zM458 350h2v2h-2zM546 290h2v2h-2zM586 334h2v2h-2zM620 392h2v2h-2zM444 372h2v2h-2zM534 300h2v2h-2zM612 382h2v2h-2zM536 480h2v2h-2zM424 402h2v2h-2zM534 296h2v2h-2zM598 390h2v2h-2zM596 430h2v2h-2zM454 384h2v2h-2zM536 300h2v2h-2zM586 344h2v2h-2zM616 386h2v2h-2zM578 438h2v2h-2zM536 306h2v2h-2zM442 384h2v2h-2zM474 340h2v2h-2zM524 310h2v2h-2zM580 348h2v2h-2zM608 396h2v2h-2zM582 450h2v2h-2zM544 446h2v2h-2zM466 446h2v2h-2zM486 330h2v2h-2zM516 312h2v2h-2zM574 338h2v2h-2zM598 444h2v2h-2zM516 454h2v2h-2zM478 448h2v2h-2zM512 304h2v2h-2zM594 336h2v2h-2zM618 368h2v2h-2zM548 458h2v2h-2zM450 382h2v2h-2zM600 396h2v2h-2zM466 314h2v2h-2zM434 392h2v2h-2zM460 332h2v2h-2zM614 374h2v2h-2zM524 468h2v2h-2zM474 448h2v2h-2zM466 330h2v2h-2zM586 316h2v2h-2zM580 444h2v2h-2zM484 422h2v2h-2zM442 372h2v2h-2zM476 350h2v2h-2zM510 308h2v2h-2zM616 370h2v2h-2zM594 446h2v2h-2zM528 462h2v2h-2zM446 382h2v2h-2zM452 330h2v2h-2zM580 330h2v2h-2zM596 460h2v2h-2zM520 452h2v2h-2zM476 454h2v2h-2zM452 392h2v2h-2zM536 298h2v2h-2zM574 322h2v2h-2zM632 402h2v2h-2zM478 442h2v2h-2zM436 396h2v2h-2zM598 370h2v2h-2zM474 444h2v2h-2zM534 310h2v2h-2zM620 388h2v2h-2zM592 448h2v2h-2zM464 440h2v2h-2zM480 344h2v2h-2zM596 336h2v2h-2zM622 378h2v2h-2zM538 468h2v2h-2zM480 324h2v2h-2zM530 322h2v2h-2zM596 332h2v2h-2zM472 442h2v2h-2zM458 330h2v2h-2zM584 336h2v2h-2zM628 392h2v2h-2zM590 432h2v2h-2zM542 468h2v2h-2zM580 340h2v2h-2zM608 374h2v2h-2zM520 464h2v2h-2zM470 434h2v2h-2zM442 398h2v2h-2zM530 306h2v2h-2zM612 368h2v2h-2zM588 436h2v2h-2zM532 462h2v2h-2zM470 460h2v2h-2zM458 312h2v2h-2zM516 308h2v2h-2zM582 316h2v2h-2zM600 392h2v2h-2zM484 450h2v2h-2zM482 340h2v2h-2zM608 378h2v2h-2zM584 432h2v2h-2zM536 470h2v2h-2zM460 454h2v2h-2zM484 336h2v2h-2zM546 296h2v2h-2zM592 334h2v2h-2zM596 432h2v2h-2zM518 456h2v2h-2zM468 324h2v2h-2zM526 314h2v2h-2zM610 400h2v2h-2zM476 434h2v2h-2zM452 388h2v2h-2zM456 336h2v2h-2zM522 316h2v2h-2zM582 328h2v2h-2zM470 422h2v2h-2zM454 330h2v2h-2zM534 314h2v2h-2zM578 342h2v2h-2zM610 406h2v2h-2zM524 458h2v2h-2zM456 392h2v2h-2zM464 316h2v2h-2zM580 334h2v2h-2zM614 386h2v2h-2zM588 442h2v2h-2zM530 472h2v2h-2zM476 438h2v2h-2zM432 398h2v2h-2zM516 304h2v2h-2zM588 318h2v2h-2zM596 456h2v2h-2zM520 456h2v2h-2zM446 376h2v2h-2zM474 336h2v2h-2zM534 302h2v2h-2zM590 336h2v2h-2zM590 448h2v2h-2zM482 328h2v2h-2zM546 318h2v2h-2zM532 476h2v2h-2zM458 338h2v2h-2zM526 298h2v2h-2zM618 396h2v2h-2zM576 452h2v2h-2zM534 462h2v2h-2zM458 436h2v2h-2zM438 388h2v2h-2zM532 294h2v2h-2zM594 320h2v2h-2zM582 454h2v2h-2zM472 430h2v2h-2zM462 334h2v2h-2zM580 314h2v2h-2zM506 468h2v2h-2zM478 446h2v2h-2zM478 326h2v2h-2zM538 312h2v2h-2zM576 326h2v2h-2zM600 386h2v2h-2zM592 436h2v2h-2zM512 476h2v2h-2zM472 454h2v2h-2zM434 394h2v2h-2zM484 346h2v2h-2zM576 450h2v2h-2zM470 456h2v2h-2zM452 382h2v2h-2zM472 344h2v2h-2zM596 340h2v2h-2zM530 486h2v2h-2zM462 452h2v2h-2zM450 374h2v2h-2zM526 304h2v2h-2zM616 382h2v2h-2zM482 442h2v2h-2zM466 338h2v2h-2zM520 310h2v2h-2zM626 380h2v2h-2zM600 450h2v2h-2zM538 458h2v2h-2zM478 454h2v2h-2zM488 332h2v2h-2zM526 302h2v2h-2zM614 400h2v2h-2zM476 456h2v2h-2zM434 378h2v2h-2zM460 316h2v2h-2zM534 292h2v2h-2zM592 342h2v2h-2zM600 384h2v2h-2zM572 450h2v2h-2zM520 306h2v2h-2zM572 326h2v2h-2zM628 388h2v2h-2zM520 454h2v2h-2zM462 322h2v2h-2zM602 406h2v2h-2zM578 444h2v2h-2zM436 400h2v2h-2zM462 336h2v2h-2zM590 338h2v2h-2zM532 460h2v2h-2zM422 386h2v2h-2zM460 318h2v2h-2zM526 312h2v2h-2zM584 340h2v2h-2zM604 378h2v2h-2zM522 294h2v2h-2zM596 324h2v2h-2zM604 380h2v2h-2zM584 434h2v2h-2zM526 462h2v2h-2zM464 436h2v2h-2zM532 290h2v2h-2zM618 376h2v2h-2zM466 450h2v2h-2zM432 372h2v2h-2zM478 334h2v2h-2zM590 320h2v2h-2zM620 384h2v2h-2zM512 456h2v2h-2zM600 330h2v2h-2zM626 402h2v2h-2zM600 452h2v2h-2zM482 334h2v2h-2zM526 292h2v2h-2zM570 448h2v2h-2zM526 486h2v2h-2zM456 388h2v2h-2zM470 326h2v2h-2zM524 318h2v2h-2zM596 344h2v2h-2zM516 470h2v2h-2zM520 316h2v2h-2zM600 326h2v2h-2zM606 452h2v2h-2zM524 452h2v2h-2zM458 384h2v2h-2zM464 326h2v2h-2zM578 338h2v2h-2zM598 378h2v2h-2zM536 292h2v2h-2zM620 376h2v2h-2zM580 428h2v2h-2zM456 438h2v2h-2zM448 398h2v2h-2zM520 298h2v2h-2zM612 400h2v2h-2zM540 474h2v2h-2zM476 324h2v2h-2zM618 398h2v2h-2zM478 336h2v2h-2zM610 448h2v2h-2zM446 378h2v2h-2zM482 326h2v2h-2zM538 288h2v2h-2zM450 448h2v2h-2zM462 326h2v2h-2zM544 320h2v2h-2zM586 340h2v2h-2zM600 372h2v2h-2zM584 438h2v2h-2zM492 438h2v2h-2zM544 296h2v2h-2zM614 376h2v2h-2zM574 426h2v2h-2zM532 468h2v2h-2zM470 424h2v2h-2zM458 322h2v2h-2zM536 310h2v2h-2zM468 438h2v2h-2zM462 390h2v2h-2zM472 348h2v2h-2zM540 294h2v2h-2zM626 398h2v2h-2zM594 434h2v2h-2zM520 468h2v2h-2zM472 434h2v2h-2zM440 384h2v2h-2zM528 296h2v2h-2zM596 342h2v2h-2zM474 450h2v2h-2zM436 402h2v2h-2zM486 344h2v2h-2zM546 312h2v2h-2zM606 388h2v2h-2zM512 484h2v2h-2zM486 442h2v2h-2zM532 458h2v2h-2zM464 328h2v2h-2zM536 318h2v2h-2zM448 376h2v2h-2zM528 298h2v2h-2zM474 344h2v2h-2zM580 338h2v2h-2zM578 448h2v2h-2zM536 474h2v2h-2zM476 428h2v2h-2zM438 398h2v2h-2zM460 338h2v2h-2zM544 312h2v2h-2zM596 328h2v2h-2zM602 386h2v2h-2zM444 400h2v2h-2zM472 330h2v2h-2zM528 302h2v2h-2zM598 330h2v2h-2zM604 384h2v2h-2zM536 458h2v2h-2zM536 450h2v2h-2zM448 378h2v2h-2zM454 342h2v2h-2zM592 396h2v2h-2zM592 428h2v2h-2zM462 382h2v2h-2zM584 330h2v2h-2zM592 444h2v2h-2zM540 464h2v2h-2zM478 438h2v2h-2zM594 382h2v2h-2zM582 440h2v2h-2zM520 466h2v2h-2zM474 440h2v2h-2zM440 396h2v2h-2zM476 336h2v2h-2zM538 304h2v2h-2zM608 386h2v2h-2zM526 474h2v2h-2zM468 448h2v2h-2zM474 320h2v2h-2zM520 302h2v2h-2zM590 342h2v2h-2zM470 452h2v2h-2zM476 330h2v2h-2zM578 326h2v2h-2zM608 410h2v2h-2zM584 456h2v2h-2zM456 334h2v2h-2zM616 394h2v2h-2zM516 456h2v2h-2zM442 374h2v2h-2zM588 434h2v2h-2zM508 466h2v2h-2zM448 370h2v2h-2zM522 308h2v2h-2zM530 452h2v2h-2zM474 338h2v2h-2zM592 442h2v2h-2zM436 382h2v2h-2zM502 300h2v2h-2zM516 482h2v2h-2zM464 434h2v2h-2zM460 336h2v2h-2zM516 298h2v2h-2zM602 392h2v2h-2zM514 464h2v2h-2zM472 448h2v2h-2zM540 298h2v2h-2zM598 308h2v2h-2zM618 382h2v2h-2zM518 466h2v2h-2zM470 448h2v2h-2zM454 350h2v2h-2zM576 338h2v2h-2zM608 398h2v2h-2zM534 458h2v2h-2zM468 340h2v2h-2zM504 300h2v2h-2zM616 390h2v2h-2zM454 440h2v2h-2zM586 322h2v2h-2zM600 454h2v2h-2zM462 446h2v2h-2zM460 392h2v2h-2zM452 320h2v2h-2zM580 460h2v2h-2zM452 430h2v2h-2zM424 386h2v2h-2zM598 388h2v2h-2zM524 470h2v2h-2zM462 328h2v2h-2zM598 340h2v2h-2zM474 334h2v2h-2zM574 334h2v2h-2zM514 480h2v2h-2zM474 462h2v2h-2zM530 464h2v2h-2zM458 442h2v2h-2zM442 400h2v2h-2zM584 332h2v2h-2zM618 402h2v2h-2zM536 472h2v2h-2zM462 450h2v2h-2zM538 314h2v2h-2zM532 472h2v2h-2zM480 444h2v2h-2zM458 336h2v2h-2zM592 324h2v2h-2zM608 384h2v2h-2zM600 456h2v2h-2zM526 454h2v2h-2zM446 390h2v2h-2zM618 378h2v2h-2zM516 472h2v2h-2zM468 332h2v2h-2zM622 396h2v2h-2zM592 460h2v2h-2zM598 324h2v2h-2zM464 446h2v2h-2zM530 312h2v2h-2zM618 384h2v2h-2zM582 460h2v2h-2zM534 474h2v2h-2zM462 456h2v2h-2zM432 382h2v2h-2zM588 316h2v2h-2zM464 338h2v2h-2zM598 450h2v2h-2zM538 466h2v2h-2zM468 330h2v2h-2zM574 316h2v2h-2zM540 468h2v2h-2zM478 316h2v2h-2zM520 474h2v2h-2zM458 454h2v2h-2zM458 326h2v2h-2zM602 320h2v2h-2zM424 394h2v2h-2zM524 308h2v2h-2zM620 374h2v2h-2zM526 478h2v2h-2zM462 318h2v2h-2zM584 338h2v2h-2zM486 440h2v2h-2zM458 370h2v2h-2zM582 320h2v2h-2zM610 398h2v2h-2zM524 462h2v2h-2zM460 456h2v2h-2zM448 388h2v2h-2zM466 322h2v2h-2zM540 312h2v2h-2zM476 436h2v2h-2zM456 396h2v2h-2zM578 330h2v2h-2zM614 398h2v2h-2zM594 450h2v2h-2zM456 326h2v2h-2zM450 398h2v2h-2zM462 340h2v2h-2zM524 292h2v2h-2zM610 368h2v2h-2zM586 442h2v2h-2zM458 398h2v2h-2zM466 324h2v2h-2zM532 314h2v2h-2zM592 322h2v2h-2zM598 452h2v2h-2zM466 454h2v2h-2zM440 390h2v2h-2zM476 322h2v2h-2zM572 444h2v2h-2zM474 456h2v2h-2zM594 322h2v2h-2zM590 460h2v2h-2zM434 388h2v2h-2zM540 306h2v2h-2zM590 394h2v2h-2zM524 460h2v2h-2zM468 452h2v2h-2zM450 326h2v2h-2zM574 324h2v2h-2zM580 436h2v2h-2zM464 342h2v2h-2zM518 488h2v2h-2zM546 306h2v2h-2zM580 332h2v2h-2zM450 384h2v2h-2zM568 318h2v2h-2zM604 398h2v2h-2zM574 450h2v2h-2zM472 336h2v2h-2zM582 332h2v2h-2zM600 378h2v2h-2zM466 440h2v2h-2zM534 316h2v2h-2zM582 456h2v2h-2zM522 460h2v2h-2zM480 332h2v2h-2zM596 440h2v2h-2zM440 374h2v2h-2zM470 324h2v2h-2zM532 284h2v2h-2zM594 384h2v2h-2zM516 468h2v2h-2zM470 436h2v2h-2zM468 326h2v2h-2zM596 334h2v2h-2zM594 442h2v2h-2zM468 426h2v2h-2zM538 306h2v2h-2zM580 458h2v2h-2zM538 474h2v2h-2zM432 396h2v2h-2zM514 316h2v2h-2zM598 326h2v2h-2zM614 394h2v2h-2zM436 410h2v2h-2zM538 320h2v2h-2zM512 468h2v2h-2zM474 452h2v2h-2zM454 322h2v2h-2zM534 322h2v2h-2zM578 340h2v2h-2zM604 424h2v2h-2zM526 468h2v2h-2zM484 456h2v2h-2zM462 388h2v2h-2zM476 340h2v2h-2zM602 402h2v2h-2zM584 428h2v2h-2zM610 332h2v2h-2zM606 402h2v2h-2zM474 454h2v2h-2zM452 396h2v2h-2zM580 424h2v2h-2zM426 396h2v2h-2zM598 376h2v2h-2zM586 454h2v2h-2zM452 374h2v2h-2zM582 322h2v2h-2zM604 406h2v2h-2zM600 444h2v2h-2zM448 428h2v2h-2zM444 398h2v2h-2zM468 322h2v2h-2zM576 328h2v2h-2zM610 382h2v2h-2zM468 460h2v2h-2zM534 480h2v2h-2zM458 446h2v2h-2zM452 372h2v2h-2zM518 316h2v2h-2zM594 448h2v2h-2zM530 458h2v2h-2zM422 402h2v2h-2zM582 444h2v2h-2zM446 396h2v2h-2zM584 334h2v2h-2zM578 432h2v2h-2zM578 336h2v2h-2zM580 450h2v2h-2zM532 464h2v2h-2zM530 298h2v2h-2zM622 380h2v2h-2zM598 446h2v2h-2zM428 390h2v2h-2zM460 334h2v2h-2zM516 306h2v2h-2zM582 318h2v2h-2zM582 434h2v2h-2zM530 454h2v2h-2zM456 394h2v2h-2zM598 334h2v2h-2zM518 472h2v2h-2zM484 442h2v2h-2zM554 306h2v2h-2zM594 436h2v2h-2zM476 444h2v2h-2zM454 376h2v2h-2zM472 326h2v2h-2zM580 328h2v2h-2zM604 390h2v2h-2zM530 462h2v2h-2zM450 388h2v2h-2zM608 400h2v2h-2zM510 472h2v2h-2zM454 448h2v2h-2zM584 328h2v2h-2zM620 382h2v2h-2zM522 456h2v2h-2zM592 312h2v2h-2zM602 394h2v2h-2zM586 460h2v2h-2zM480 446h2v2h-2zM468 336h2v2h-2zM524 302h2v2h-2zM534 446h2v2h-2zM610 384h2v2h-2zM550 454h2v2h-2zM478 440h2v2h-2zM442 394h2v2h-2zM468 320h2v2h-2zM572 332h2v2h-2zM526 482h2v2h-2zM452 318h2v2h-2zM520 322h2v2h-2zM588 456h2v2h-2zM534 478h2v2h-2zM440 386h2v2h-2zM622 394h2v2h-2zM452 402h2v2h-2zM462 342h2v2h-2zM436 386h2v2h-2zM472 338h2v2h-2zM588 346h2v2h-2zM596 388h2v2h-2zM606 446h2v2h-2zM514 468h2v2h-2zM458 438h2v2h-2zM446 400h2v2h-2zM538 308h2v2h-2zM516 458h2v2h-2zM468 440h2v2h-2zM534 464h2v2h-2zM602 444h2v2h-2zM444 376h2v2h-2zM538 294h2v2h-2zM598 336h2v2h-2zM598 442h2v2h-2zM478 426h2v2h-2zM454 380h2v2h-2zM476 318h2v2h-2zM482 440h2v2h-2zM444 402h2v2h-2zM570 330h2v2h-2zM608 376h2v2h-2zM530 456h2v2h-2zM482 438h2v2h-2zM590 444h2v2h-2zM462 438h2v2h-2zM460 342h2v2h-2zM482 446h2v2h-2zM476 328h2v2h-2zM532 322h2v2h-2zM574 320h2v2h-2zM444 386h2v2h-2zM478 346h2v2h-2zM516 310h2v2h-2zM588 338h2v2h-2zM620 394h2v2h-2zM514 478h2v2h-2zM478 436h2v2h-2zM454 392h2v2h-2zM450 336h2v2h-2zM522 314h2v2h-2zM594 438h2v2h-2zM514 482h2v2h-2zM482 448h2v2h-2zM440 378h2v2h-2zM602 440h2v2h-2zM592 432h2v2h-2zM512 480h2v2h-2zM456 324h2v2h-2zM532 300h2v2h-2zM594 338h2v2h-2zM464 382h2v2h-2zM430 390h2v2h-2zM588 322h2v2h-2zM588 438h2v2h-2zM516 480h2v2h-2zM576 344h2v2h-2zM612 394h2v2h-2zM528 454h2v2h-2zM456 450h2v2h-2zM456 314h2v2h-2zM522 298h2v2h-2zM624 382h2v2h-2zM474 458h2v2h-2zM434 384h2v2h-2zM466 458h2v2h-2zM448 372h2v2h-2zM600 320h2v2h-2zM536 476h2v2h-2zM602 368h2v2h-2zM526 464h2v2h-2zM454 386h2v2h-2zM538 310h2v2h-2zM574 326h2v2h-2zM626 392h2v2h-2zM600 332h2v2h-2zM622 390h2v2h-2zM518 458h2v2h-2zM472 346h2v2h-2zM584 444h2v2h-2zM466 434h2v2h-2zM534 318h2v2h-2zM516 462h2v2h-2zM460 380h2v2h-2zM602 332h2v2h-2zM610 376h2v2h-2zM534 476h2v2h-2zM458 342h2v2h-2zM532 298h2v2h-2zM620 398h2v2h-2zM564 448h2v2h-2zM540 460h2v2h-2zM454 444h2v2h-2zM460 326h2v2h-2zM604 332h2v2h-2zM608 370h2v2h-2zM526 458h2v2h-2zM458 432h2v2h-2zM536 302h2v2h-2zM524 296h2v2h-2zM588 342h2v2h-2zM598 458h2v2h-2zM470 466h2v2h-2zM472 316h2v2h-2zM522 296h2v2h-2zM528 484h2v2h-2zM470 454h2v2h-2zM474 326h2v2h-2zM480 452h2v2h-2zM458 376h2v2h-2zM484 330h2v2h-2zM516 302h2v2h-2zM576 330h2v2h-2zM600 380h2v2h-2zM466 428h2v2h-2zM570 316h2v2h-2zM524 456h2v2h-2zM458 316h2v2h-2zM528 292h2v2h-2zM600 322h2v2h-2zM580 430h2v2h-2zM476 460h2v2h-2zM432 390h2v2h-2zM600 438h2v2h-2zM540 444h2v2h-2zM474 330h2v2h-2zM542 294h2v2h-2zM580 342h2v2h-2zM614 372h2v2h-2zM538 476h2v2h-2zM518 304h2v2h-2zM570 326h2v2h-2zM598 396h2v2h-2zM464 460h2v2h-2zM464 306h2v2h-2zM612 374h2v2h-2zM460 324h2v2h-2zM520 300h2v2h-2zM528 314h2v2h-2zM584 322h2v2h-2zM594 440h2v2h-2zM606 378h2v2h-2zM544 308h2v2h-2zM600 344h2v2h-2zM604 396h2v2h-2zM596 454h2v2h-2zM606 392h2v2h-2zM462 430h2v2h-2zM466 332h2v2h-2zM518 310h2v2h-2zM464 450h2v2h-2zM600 316h2v2h-2zM536 466h2v2h-2zM540 462h2v2h-2zM512 458h2v2h-2zM460 450h2v2h-2zM510 304h2v2h-2zM564 330h2v2h-2zM472 462h2v2h-2zM594 342h2v2h-2zM458 400h2v2h-2zM520 304h2v2h-2zM612 392h2v2h-2zM514 476h2v2h-2zM460 430h2v2h-2zM476 432h2v2h-2zM524 298h2v2h-2zM592 314h2v2h-2zM602 452h2v2h-2zM580 324h2v2h-2zM606 376h2v2h-2zM570 340h2v2h-2zM522 310h2v2h-2zM622 384h2v2h-2zM442 382h2v2h-2zM456 344h2v2h-2zM532 292h2v2h-2zM580 322h2v2h-2zM606 368h2v2h-2zM474 434h2v2h-2zM454 374h2v2h-2zM592 454h2v2h-2zM468 454h2v2h-2zM482 342h2v2h-2zM582 338h2v2h-2zM468 344h2v2h-2zM592 316h2v2h-2zM612 390h2v2h-2zM582 436h2v2h-2zM580 434h2v2h-2zM514 456h2v2h-2zM470 450h2v2h-2z" fill="#0000ff"/><path d="M528 310h2v2h-2zM586 328h2v2h-2zM472 334h2v2h-2zM580 326h2v2h-2zM614 388h2v2h-2zM530 470h2v2h-2zM448 396h2v2h-2zM464 324h2v2h-2zM528 306h2v2h-2zM608 380h2v2h-2zM522 468h2v2h-2zM444 396h2v2h-2zM528 300h2v2h-2zM522 302h2v2h-2zM436 394h2v2h-2zM616 392h2v2h-2zM534 470h2v2h-2zM450 372h2v2h-2zM468 338h2v2h-2zM592 328h2v2h-2zM522 464h2v2h-2zM476 442h2v2h-2zM438 394h2v2h-2zM522 472h2v2h-2zM446 388h2v2h-2zM470 334h2v2h-2zM528 308h2v2h-2zM524 464h2v2h-2zM442 390h2v2h-2zM590 332h2v2h-2zM608 392h2v2h-2zM590 440h2v2h-2zM464 442h2v2h-2zM442 386h2v2h-2zM586 338h2v2h-2zM524 472h2v2h-2zM586 332h2v2h-2zM470 336h2v2h-2zM532 312h2v2h-2zM594 328h2v2h-2zM586 440h2v2h-2zM524 314h2v2h-2zM588 330h2v2h-2zM624 386h2v2h-2zM472 438h2v2h-2zM444 392h2v2h-2zM470 340h2v2h-2zM512 474h2v2h-2zM460 442h2v2h-2zM464 332h2v2h-2zM470 320h2v2h-2zM594 326h2v2h-2zM474 328h2v2h-2zM592 446h2v2h-2zM466 326h2v2h-2zM604 392h2v2h-2zM462 442h2v2h-2zM446 392h2v2h-2zM468 328h2v2h-2zM468 334h2v2h-2zM590 324h2v2h-2zM530 468h2v2h-2zM466 436h2v2h-2zM460 320h2v2h-2zM526 470h2v2h-2zM448 390h2v2h-2zM474 332h2v2h-2zM608 388h2v2h-2zM528 468h2v2h-2zM534 298h2v2h-2zM604 394h2v2h-2zM466 432h2v2h-2zM588 334h2v2h-2zM596 436h2v2h-2zM526 472h2v2h-2zM594 444h2v2h-2zM518 468h2v2h-2zM450 386h2v2h-2zM532 306h2v2h-2zM586 336h2v2h-2zM448 386h2v2h-2zM466 318h2v2h-2zM474 428h2v2h-2zM530 308h2v2h-2zM592 336h2v2h-2zM624 396h2v2h-2zM468 442h2v2h-2zM528 304h2v2h-2zM586 324h2v2h-2zM586 438h2v2h-2zM432 388h2v2h-2zM590 334h2v2h-2zM586 444h2v2h-2zM534 468h2v2h-2zM440 380h2v2h-2zM460 328h2v2h-2zM592 326h2v2h-2zM472 340h2v2h-2zM466 442h2v2h-2zM452 386h2v2h-2zM462 332h2v2h-2zM474 438h2v2h-2zM528 472h2v2h-2zM586 436h2v2h-2zM468 446h2v2h-2zM448 384h2v2h-2zM438 386h2v2h-2zM526 308h2v2h-2zM588 332h2v2h-2zM588 450h2v2h-2zM464 334h2v2h-2zM462 448h2v2h-2zM470 328h2v2h-2zM600 448h2v2h-2zM578 328h2v2h-2zM608 390h2v2h-2zM524 474h2v2h-2zM480 440h2v2h-2zM468 444h2v2h-2zM440 394h2v2h-2zM582 330h2v2h-2zM590 438h2v2h-2zM470 338h2v2h-2zM588 446h2v2h-2zM476 326h2v2h-2zM588 328h2v2h-2zM582 448h2v2h-2zM582 326h2v2h-2zM608 394h2v2h-2zM588 440h2v2h-2zM528 474h2v2h-2zM460 434h2v2h-2zM462 440h2v2h-2zM464 330h2v2h-2zM590 330h2v2h-2zM472 446h2v2h-2zM586 326h2v2h-2zM610 392h2v2h-2zM590 434h2v2h-2zM460 448h2v2h-2zM444 382h2v2h-2zM588 448h2v2h-2zM478 324h2v2h-2zM532 302h2v2h-2zM540 308h2v2h-2zM614 384h2v2h-2zM580 438h2v2h-2zM522 462h2v2h-2zM450 390h2v2h-2zM610 388h2v2h-2zM532 466h2v2h-2zM616 388h2v2h-2zM582 438h2v2h-2zM530 460h2v2h-2zM530 304h2v2h-2zM438 380h2v2h-2zM530 476h2v2h-2zM530 310h2v2h-2zM436 378h2v2h-2zM582 442h2v2h-2zM586 450h2v2h-2zM524 300h2v2h-2zM472 450h2v2h-2zM594 334h2v2h-2zM626 386h2v2h-2zM442 388h2v2h-2zM582 324h2v2h-2zM534 472h2v2h-2zM440 382h2v2h-2zM616 398h2v2h-2zM526 310h2v2h-2zM578 446h2v2h-2zM584 324h2v2h-2zM584 448h2v2h-2zM470 446h2v2h-2zM446 386h2v2h-2zM530 466h2v2h-2zM534 460h2v2h-2zM470 332h2v2h-2zM534 308h2v2h-2zM440 388h2v2h-2zM468 436h2v2h-2zM580 452h2v2h-2zM606 384h2v2h-2zM464 452h2v2h-2zM534 466h2v2h-2zM590 436h2v2h-2zM470 438h2v2h-2zM520 472h2v2h-2zM470 444h2v2h-2zM530 302h2v2h-2zM590 446h2v2h-2zM446 384h2v2h-2zM444 388h2v2h-2zM526 466h2v2h-2zM590 450h2v2h-2zM584 326h2v2h-2zM614 380h2v2h-2zM588 444h2v2h-2zM622 388h2v2h-2zM434 386h2v2h-2zM530 300h2v2h-2zM588 336h2v2h-2zM474 436h2v2h-2zM452 390h2v2h-2zM580 454h2v2h-2zM590 328h2v2h-2zM612 386h2v2h-2zM610 380h2v2h-2zM466 438h2v2h-2zM532 470h2v2h-2zM470 330h2v2h-2zM584 440h2v2h-2zM524 304h2v2h-2zM444 390h2v2h-2zM466 334h2v2h-2zM528 464h2v2h-2zM612 372h2v2h-2zM594 318h2v2h-2zM534 304h2v2h-2zM596 442h2v2h-2zM580 440h2v2h-2zM466 444h2v2h-2zM584 446h2v2h-2zM444 384h2v2h-2zM454 382h2v2h-2zM530 296h2v2h-2zM616 384h2v2h-2zM602 384h2v2h-2zM534 306h2v2h-2zM586 452h2v2h-2zM588 326h2v2h-2zM532 304h2v2h-2zM444 394h2v2h-2zM592 456h2v2h-2zM438 378h2v2h-2z" fill="#6a1478"/></svg>
<div class="t" style="top:546.0px;font-size:10.7px;line-height:14px;color:#000;right:750.6px;">IQScan point</div>
<div class="b" style="left:539px;top:543px;width:135px;height:19px;background:#fff;border:1px solid;border-color:#a0a0a0 #fff #fff #a0a0a0;box-shadow:inset 1px 1px #696969,inset -1px -1px #e3e3e3"></div>
<div class="b" style="left:656px;top:545px;width:16px;height:15px;background:#f0f0f0;border:1px solid;border-color:#e3e3e3 #696969 #696969 #e3e3e3;box-shadow:inset 1px 1px #fff,inset -1px -1px #a0a0a0"></div>
<svg class="b" style="left:660.5px;top:550.5px" width="7" height="4"><path d="M0 0H7L3.5 4Z" fill="#000"/></svg>
<div class="t" style="top:545.5px;font-size:10.7px;line-height:14px;color:#000;left:543.0px;">Demod IQ out</div>
<div class="b" style="left:420px;top:570px;width:439px;height:43px;border:1px solid #a0a0a0;box-shadow:inset 1px 1px #fff, 1px 1px #fff"></div>
<div class="t" style="top:563.0px;font-size:10.7px;line-height:14px;color:#8c8c8c;left:427.0px;"><span style="background:#f0f0f0;padding:0 2px">Modcode filter</span></div>
<div class="t" style="top:583.0px;font-size:10.7px;line-height:14px;color:#8c8c8c;left:428.0px;">Modcode</div>
<div class="b" style="left:500px;top:584px;width:219px;height:20px;background:#f0f0f0;border:1px solid;border-color:#a0a0a0 #fff #fff #a0a0a0;box-shadow:inset 1px 1px #696969"></div>
<div class="b" style="left:701px;top:586px;width:16px;height:16px;border:1px solid;border-color:#fff #a0a0a0 #a0a0a0 #fff"></div>
<svg class="b" style="left:705.5px;top:592.0px" width="7" height="4"><path d="M0 0H7L3.5 4Z" fill="#a0a0a0"/></svg>
<div class="t" style="top:587.0px;font-size:10.7px;line-height:14px;color:#8c8c8c;left:503.0px;">All</div>
<div class="b" style="left:729px;top:583px;width:61px;height:24px;background:#f0f0f0;border:1px solid #000;box-shadow:inset 1px 1px #fff,inset -1px -1px #696969"></div>
<div class="t" style="top:587.5px;font-size:10.7px;line-height:14px;color:#8c8c8c;left:759.5px;transform:translateX(-50%);">Detect</div>
<div class="b" style="left:799px;top:583px;width:50px;height:24px;background:#fff;border:1px solid;border-color:#a0a0a0 #fff #fff #a0a0a0;box-shadow:inset 1px 1px #696969,inset -1px -1px #e3e3e3"></div>
<div class="b" style="left:831px;top:585px;width:16px;height:11px;background:#f0f0f0;border:1px solid;border-color:#e3e3e3 #696969 #696969 #e3e3e3;box-shadow:inset 1px 1px #fff,inset -1px -1px #a0a0a0"></div>
<div class="b" style="left:831px;top:595px;width:16px;height:10px;background:#f0f0f0;border:1px solid;border-color:#e3e3e3 #696969 #696969 #e3e3e3;box-shadow:inset 1px 1px #fff,inset -1px -1px #a0a0a0"></div>
<svg class="b" style="left:837px;top:587px" width="5" height="16"><path d="M2.5 0.5L4.5 2.5H0.5Z" fill="#a0a0a0"/><path d="M0.5 13.5H4.5L2.5 15.5Z" fill="#a0a0a0"/></svg>
<div class="t" style="top:588.0px;font-size:10.7px;line-height:14px;color:#8c8c8c;left:803.0px;">3 sec</div>
<div class="b" style="left:693px;top:190px;width:220px;height:172px;border:1px solid #a0a0a0;box-shadow:inset 1px 1px #fff, 1px 1px #fff"></div>
<div class="t" style="top:183.0px;font-size:10.7px;line-height:14px;color:#000;left:700.0px;"><span style="background:#f0f0f0;padding:0 2px">Search parameters</span></div>
<div class="t" style="top:206.0px;font-size:10.7px;line-height:14px;color:#000;right:485.1px;">Frequency</div>
<div class="b" style="left:798px;top:204px;width:108px;height:18px;background:#fff;border:1px solid;border-color:#a0a0a0 #fff #fff #a0a0a0;box-shadow:inset 1px 1px #696969,inset -1px -1px #e3e3e3"></div>
<div class="b" style="left:888px;top:206px;width:16px;height:8px;background:#f0f0f0;border:1px solid;border-color:#e3e3e3 #696969 #696969 #e3e3e3;box-shadow:inset 1px 1px #fff,inset -1px -1px #a0a0a0"></div>
<div class="b" style="left:888px;top:213px;width:16px;height:7px;background:#f0f0f0;border:1px solid;border-color:#e3e3e3 #696969 #696969 #e3e3e3;box-shadow:inset 1px 1px #fff,inset -1px -1px #a0a0a0"></div>
<svg class="b" style="left:894px;top:208px" width="5" height="10"><path d="M2.5 0.5L4.5 2.5H0.5Z" fill="#000"/><path d="M0.5 7.5H4.5L2.5 9.5Z" fill="#000"/></svg>
<div class="t" style="top:206.0px;font-size:10.7px;line-height:14px;color:#000;left:802.0px;">10763,000 MHz</div>
<div class="t" style="top:228.5px;font-size:10.7px;line-height:14px;color:#000;right:485.1px;">Search range</div>
<div class="b" style="left:798px;top:226px;width:108px;height:18px;background:#fff;border:1px solid;border-color:#a0a0a0 #fff #fff #a0a0a0;box-shadow:inset 1px 1px #696969,inset -1px -1px #e3e3e3"></div>
<div class="b" style="left:888px;top:228px;width:16px;height:8px;background:#f0f0f0;border:1px solid;border-color:#e3e3e3 #696969 #696969 #e3e3e3;box-shadow:inset 1px 1px #fff,inset -1px -1px #a0a0a0"></div>
<div class="b" style="left:888px;top:235px;width:16px;height:7px;background:#f0f0f0;border:1px solid;border-color:#e3e3e3 #696969 #696969 #e3e3e3;box-shadow:inset 1px 1px #fff,inset -1px -1px #a0a0a0"></div>
<svg class="b" style="left:894px;top:230px" width="5" height="10"><path d="M2.5 0.5L4.5 2.5H0.5Z" fill="#000"/><path d="M0.5 7.5H4.5L2.5 9.5Z" fill="#000"/></svg>
<div class="t" style="top:228.0px;font-size:10.7px;line-height:14px;color:#000;left:802.0px;">5 MHz</div>
<div class="t" style="top:251.0px;font-size:10.7px;line-height:14px;color:#000;right:485.1px;">Polarization</div>
<div class="b" style="left:798px;top:248px;width:108px;height:18px;background:#fff;border:1px solid;border-color:#a0a0a0 #fff #fff #a0a0a0;box-shadow:inset 1px 1px #696969,inset -1px -1px #e3e3e3"></div>
<div class="b" style="left:888px;top:250px;width:16px;height:14px;background:#f0f0f0;border:1px solid;border-color:#e3e3e3 #696969 #696969 #e3e3e3;box-shadow:inset 1px 1px #fff,inset -1px -1px #a0a0a0"></div>
<svg class="b" style="left:892.5px;top:255.0px" width="7" height="4"><path d="M0 0H7L3.5 4Z" fill="#000"/></svg>
<div class="t" style="top:250.0px;font-size:10.7px;line-height:14px;color:#000;left:802.0px;">H/L</div>
<div class="t" style="top:273.5px;font-size:10.7px;line-height:14px;color:#000;right:485.1px;">Minimal Symbol rate</div>
<div class="b" style="left:798px;top:271px;width:108px;height:18px;background:#fff;border:1px solid;border-color:#a0a0a0 #fff #fff #a0a0a0;box-shadow:inset 1px 1px #696969,inset -1px -1px #e3e3e3"></div>
<div class="b" style="left:888px;top:273px;width:16px;height:14px;background:#f0f0f0;border:1px solid;border-color:#e3e3e3 #696969 #696969 #e3e3e3;box-shadow:inset 1px 1px #fff,inset -1px -1px #a0a0a0"></div>
<svg class="b" style="left:892.5px;top:278.0px" width="7" height="4"><path d="M0 0H7L3.5 4Z" fill="#000"/></svg>
<div class="t" style="top:273.0px;font-size:10.7px;line-height:14px;color:#000;left:802.0px;"> 1000</div>
<div class="t" style="top:296.5px;font-size:10.7px;line-height:14px;color:#000;right:485.1px;">Search standard</div>
<div class="b" style="left:798px;top:294px;width:108px;height:18px;background:#fff;border:1px solid;border-color:#a0a0a0 #fff #fff #a0a0a0;box-shadow:inset 1px 1px #696969,inset -1px -1px #e3e3e3"></div>
<div class="b" style="left:888px;top:296px;width:16px;height:14px;background:#f0f0f0;border:1px solid;border-color:#e3e3e3 #696969 #696969 #e3e3e3;box-shadow:inset 1px 1px #fff,inset -1px -1px #a0a0a0"></div>
<svg class="b" style="left:892.5px;top:301.0px" width="7" height="4"><path d="M0 0H7L3.5 4Z" fill="#000"/></svg>
<div class="t" style="top:296.0px;font-size:10.7px;line-height:14px;color:#000;left:802.0px;">AUTO</div>
<div class="t" style="top:319.3px;font-size:10.7px;line-height:14px;color:#000;right:485.1px;">PL Scramble code</div>
<div class="b" style="left:798px;top:317px;width:53px;height:18px;background:#fff;border:1px solid;border-color:#a0a0a0 #fff #fff #a0a0a0;box-shadow:inset 1px 1px #696969,inset -1px -1px #e3e3e3"></div>
<div class="b" style="left:833px;top:319px;width:16px;height:14px;background:#f0f0f0;border:1px solid;border-color:#e3e3e3 #696969 #696969 #e3e3e3;box-shadow:inset 1px 1px #fff,inset -1px -1px #a0a0a0"></div>
<svg class="b" style="left:837.5px;top:324.0px" width="7" height="4"><path d="M0 0H7L3.5 4Z" fill="#000"/></svg>
<div class="t" style="top:319.0px;font-size:10.7px;line-height:14px;color:#000;left:802.0px;">Root</div>
<div class="b" style="left:854px;top:317px;width:52px;height:18px;background:#fff;border:1px solid;border-color:#a0a0a0 #fff #fff #a0a0a0;box-shadow:inset 1px 1px #696969,inset -1px -1px #e3e3e3"></div>
<div class="b" style="left:888px;top:319px;width:16px;height:8px;background:#f0f0f0;border:1px solid;border-color:#e3e3e3 #696969 #696969 #e3e3e3;box-shadow:inset 1px 1px #fff,inset -1px -1px #a0a0a0"></div>
<div class="b" style="left:888px;top:326px;width:16px;height:7px;background:#f0f0f0;border:1px solid;border-color:#e3e3e3 #696969 #696969 #e3e3e3;box-shadow:inset 1px 1px #fff,inset -1px -1px #a0a0a0"></div>
<svg class="b" style="left:894px;top:321px" width="5" height="10"><path d="M2.5 0.5L4.5 2.5H0.5Z" fill="#000"/><path d="M0.5 7.5H4.5L2.5 9.5Z" fill="#000"/></svg>
<div class="t" style="top:319.0px;font-size:10.7px;line-height:14px;color:#000;left:858.0px;">1</div>
<div class="b" style="left:799px;top:342px;width:12px;height:12px;background:#fff;border:1px solid;border-color:#a0a0a0 #fff #fff #a0a0a0;box-shadow:inset 1px 1px #696969,inset -1px -1px #e3e3e3"></div>
<div class="t" style="top:341.5px;font-size:10.7px;line-height:14px;color:#000;left:815.4px;">Search PLS code</div>
<div class="b" style="left:699px;top:375px;width:12px;height:12px;background:#fff;border:1px solid;border-color:#a0a0a0 #fff #fff #a0a0a0;box-shadow:inset 1px 1px #696969,inset -1px -1px #e3e3e3"></div>
<svg class="b" style="left:699px;top:375px" width="12" height="12"><path d="M3 5.5L5 7.5L9 3.5" stroke="#000" stroke-width="1.8" fill="none"/></svg>
<div class="t" style="top:374.8px;font-size:10.7px;line-height:14px;color:#000;left:716.4px;">Blind Scan</div>
<div class="t" style="top:395.3px;font-size:10.7px;line-height:14px;color:#000;left:698.2px;">Point size</div>
<div class="b" style="left:779px;top:393px;width:39px;height:18px;background:#fff;border:1px solid;border-color:#a0a0a0 #fff #fff #a0a0a0;box-shadow:inset 1px 1px #696969,inset -1px -1px #e3e3e3"></div>
<div class="b" style="left:800px;top:395px;width:16px;height:8px;background:#f0f0f0;border:1px solid;border-color:#e3e3e3 #696969 #696969 #e3e3e3;box-shadow:inset 1px 1px #fff,inset -1px -1px #a0a0a0"></div>
<div class="b" style="left:800px;top:402px;width:16px;height:7px;background:#f0f0f0;border:1px solid;border-color:#e3e3e3 #696969 #696969 #e3e3e3;box-shadow:inset 1px 1px #fff,inset -1px -1px #a0a0a0"></div>
<svg class="b" style="left:806px;top:397px" width="5" height="10"><path d="M2.5 0.5L4.5 2.5H0.5Z" fill="#000"/><path d="M0.5 7.5H4.5L2.5 9.5Z" fill="#000"/></svg>
<div class="t" style="top:395.0px;font-size:10.7px;line-height:14px;color:#000;left:783.0px;">2</div>
<div class="b" style="left:863px;top:367px;width:48px;height:48px;background:#fff;border:2px solid;border-color:#fff #808080 #808080 #fff"></div>
<svg class="b" style="left:866px;top:369px" width="43" height="43" viewBox="0 0 43 43"><g transform="scale(1.075)"><defs><linearGradient id="fl866" x1="0" y1="0" x2="0" y2="1"><stop offset="0" stop-color="#d2ecfb"/><stop offset="0.45" stop-color="#9fd4c4"/><stop offset="1" stop-color="#58b884"/></linearGradient><clipPath id="fc866"><circle cx="20" cy="20" r="19.5"/></clipPath></defs><circle cx="20" cy="20" r="19.5" fill="url(#fl866)" stroke="#666" stroke-width="0.5"/><g clip-path="url(#fc866)"><path d="M20 8Q25 4 32 7L34 6L33 9Q28 12 22 10L19 12Z" fill="#f07a3a"/><path d="M8 19Q9 13 15 9L16 7L17 11Q15 16 9 20Z" fill="#f07a3a"/><path d="M31 15Q34 18 33 22L30 21Z" fill="#f07a3a"/><path d="M6 16L15 27L13 30Z" fill="#000"/><path d="M12 28Q20 24 28 27L30 22L31 30Q30 37 22 37Q14 37 12 28Z" fill="#000"/><path d="M33 15Q38 24 34 34L31 38L29 36Q34 28 31 17Z" fill="#000"/><path d="M9 36L14 34L16 40H8Z" fill="#000"/><path d="M18 35Q22 38 26 35L26 41H18Z" fill="#f4f0b8"/><circle cx="18" cy="30.5" r="2.6" fill="#3ab0f0"/><circle cx="23.5" cy="30" r="2.6" fill="#3ab0f0"/><path d="M20 12V24M23 14V25M17 15V25" stroke="#8ab" stroke-width="0.6" opacity="0.6"/></g></g></svg>
<div class="b" style="left:690px;top:420px;width:219px;height:103px;border:1px solid #a0a0a0;box-shadow:inset 1px 1px #fff, 1px 1px #fff"></div>
<div class="t" style="top:413.0px;font-size:10.7px;line-height:14px;color:#000;left:697.0px;"><span style="background:#f0f0f0;padding:0 2px">Streaming</span></div>
<div class="t" style="top:426.8px;font-size:10.7px;line-height:14px;color:#000;left:722.9px;transform:translateX(-50%);">Proto</div>
<div class="t" style="top:426.5px;font-size:10.7px;line-height:14px;color:#000;left:793.2px;transform:translateX(-50%);">IP-address</div>
<div class="t" style="top:426.5px;font-size:10.7px;line-height:14px;color:#000;left:873.0px;transform:translateX(-50%);">Port</div>
<div class="b" style="left:699px;top:444px;width:49px;height:20px;background:#fff;border:1px solid;border-color:#a0a0a0 #fff #fff #a0a0a0;box-shadow:inset 1px 1px #696969,inset -1px -1px #e3e3e3"></div>
<div class="b" style="left:730px;top:446px;width:16px;height:16px;background:#f0f0f0;border:1px solid;border-color:#e3e3e3 #696969 #696969 #e3e3e3;box-shadow:inset 1px 1px #fff,inset -1px -1px #a0a0a0"></div>
<svg class="b" style="left:734.5px;top:452.0px" width="7" height="4"><path d="M0 0H7L3.5 4Z" fill="#000"/></svg>
<div class="t" style="top:447.0px;font-size:10.7px;line-height:14px;color:#000;left:703.0px;">UDP</div>
<div class="b" style="left:750px;top:444px;width:98px;height:20px;background:#fff;border:1px solid;border-color:#a0a0a0 #fff #fff #a0a0a0;box-shadow:inset 1px 1px #696969,inset -1px -1px #e3e3e3"></div>
<div class="b" style="left:830px;top:446px;width:16px;height:16px;background:#f0f0f0;border:1px solid;border-color:#e3e3e3 #696969 #696969 #e3e3e3;box-shadow:inset 1px 1px #fff,inset -1px -1px #a0a0a0"></div>
<svg class="b" style="left:834.5px;top:452.0px" width="7" height="4"><path d="M0 0H7L3.5 4Z" fill="#000"/></svg>
<div class="t" style="top:447.0px;font-size:10.7px;line-height:14px;color:#000;left:754.0px;">127.0.0.1</div>
<div class="b" style="left:850px;top:444px;width:49px;height:20px;background:#fff;border:1px solid;border-color:#a0a0a0 #fff #fff #a0a0a0;box-shadow:inset 1px 1px #696969,inset -1px -1px #e3e3e3"></div>
<div class="b" style="left:881px;top:446px;width:16px;height:9px;background:#f0f0f0;border:1px solid;border-color:#e3e3e3 #696969 #696969 #e3e3e3;box-shadow:inset 1px 1px #fff,inset -1px -1px #a0a0a0"></div>
<div class="b" style="left:881px;top:454px;width:16px;height:8px;background:#f0f0f0;border:1px solid;border-color:#e3e3e3 #696969 #696969 #e3e3e3;box-shadow:inset 1px 1px #fff,inset -1px -1px #a0a0a0"></div>
<svg class="b" style="left:887px;top:448px" width="5" height="12"><path d="M2.5 0.5L4.5 2.5H0.5Z" fill="#000"/><path d="M0.5 9.5H4.5L2.5 11.5Z" fill="#000"/></svg>
<div class="t" style="top:447.0px;font-size:10.7px;line-height:14px;color:#000;left:854.0px;">6969</div>
<div class="b" style="left:699px;top:475px;width:12px;height:12px;background:#fff;border:1px solid;border-color:#a0a0a0 #fff #fff #a0a0a0;box-shadow:inset 1px 1px #696969,inset -1px -1px #e3e3e3"></div>
<div class="t" style="top:475.5px;font-size:10.7px;line-height:14px;color:#000;left:716.4px;">Stream to file</div>
<div class="t" style="top:476.0px;font-size:10.7px;line-height:14px;color:#000;left:833.5px;">Buffer size</div>
<div class="b" style="left:699px;top:494px;width:119px;height:20px;background:#fff;border:1px solid;border-color:#a0a0a0 #fff #fff #a0a0a0;box-shadow:inset 1px 1px #696969,inset -1px -1px #e3e3e3"></div>
<div class="b" style="left:800px;top:496px;width:16px;height:16px;background:#f0f0f0;border:1px solid;border-color:#e3e3e3 #696969 #696969 #e3e3e3;box-shadow:inset 1px 1px #fff,inset -1px -1px #a0a0a0"></div>
<svg class="b" style="left:804.5px;top:502.0px" width="7" height="4"><path d="M0 0H7L3.5 4Z" fill="#000"/></svg>
<div class="t" style="top:497.0px;font-size:10.7px;line-height:14px;color:#000;left:703.0px;">TransEdit</div>
<div class="b" style="left:829px;top:494px;width:70px;height:20px;background:#fff;border:1px solid;border-color:#a0a0a0 #fff #fff #a0a0a0;box-shadow:inset 1px 1px #696969,inset -1px -1px #e3e3e3"></div>
<div class="b" style="left:881px;top:496px;width:16px;height:9px;background:#f0f0f0;border:1px solid;border-color:#e3e3e3 #696969 #696969 #e3e3e3;box-shadow:inset 1px 1px #fff,inset -1px -1px #a0a0a0"></div>
<div class="b" style="left:881px;top:504px;width:16px;height:8px;background:#f0f0f0;border:1px solid;border-color:#e3e3e3 #696969 #696969 #e3e3e3;box-shadow:inset 1px 1px #fff,inset -1px -1px #a0a0a0"></div>
<svg class="b" style="left:887px;top:498px" width="5" height="12"><path d="M2.5 0.5L4.5 2.5H0.5Z" fill="#000"/><path d="M0.5 9.5H4.5L2.5 11.5Z" fill="#000"/></svg>
<div class="t" style="top:497.0px;font-size:10.7px;line-height:14px;color:#000;left:833.0px;">96256</div>
<div class="b" style="left:699px;top:534px;width:151px;height:30px;border:1px solid;border-color:#a0a0a0 #fff #fff #a0a0a0"></div>
<svg class="b" style="left:830px;top:541px" width="10" height="17" viewBox="0 0 10 17"><path d="M2 1H8M1 2V8M9 2V8M1 9V15M9 9V15M2 16H8" stroke="#999" stroke-width="1.2" fill="none"/></svg>
<div class="b" style="left:869px;top:533px;width:41px;height:41px;background:#000040;border:2px solid;border-color:#fff #808080 #808080 #fff"></div>
<svg class="b" style="left:872px;top:544px" width="35" height="18" viewBox="0 0 35 18"><text x="0" y="16.5" font-family="Liberation Sans" font-weight="700" font-size="22.5" fill="#fafafa" textLength="35" lengthAdjust="spacingAndGlyphs">DVB</text></svg>
<div class="b" style="left:369px;top:620px;width:540px;height:183px;border:1px solid #a0a0a0;box-shadow:inset 1px 1px #fff, 1px 1px #fff"></div>
<div class="t" style="top:613.0px;font-size:10.7px;line-height:14px;color:#000;left:376.0px;"><span style="background:#f0f0f0;padding:0 2px">Blind scan result</span></div>
<div class="t" style="top:635.0px;font-size:12px;line-height:14px;color:#000;font-weight:700;right:827.1px;">RF Level</div>
<div class="b" style="left:455px;top:632px;width:102px;height:19px;background:#fff;border:1px solid;border-color:#a0a0a0 #fff #fff #a0a0a0;box-shadow:inset 1px 1px #696969,inset -1px -1px #e3e3e3"></div>
<div class="b" style="left:539px;top:634px;width:16px;height:8px;background:#f0f0f0;border:1px solid;border-color:#e3e3e3 #696969 #696969 #e3e3e3;box-shadow:inset 1px 1px #fff,inset -1px -1px #a0a0a0"></div>
<div class="b" style="left:539px;top:641px;width:16px;height:8px;background:#f0f0f0;border:1px solid;border-color:#e3e3e3 #696969 #696969 #e3e3e3;box-shadow:inset 1px 1px #fff,inset -1px -1px #a0a0a0"></div>
<svg class="b" style="left:545px;top:636px" width="5" height="11"><path d="M2.5 0.5L4.5 2.5H0.5Z" fill="#000"/><path d="M0.5 8.5H4.5L2.5 10.5Z" fill="#000"/></svg>
<div class="t" style="top:634.5px;font-size:12.5px;line-height:14px;color:#1e6cff;font-weight:700;left:459.0px;width:80px;overflow:hidden;">-34 dBm</div>
<div class="t" style="top:659.0px;font-size:12px;line-height:14px;color:#000;font-weight:700;right:827.1px;">Signal/Noise</div>
<div class="b" style="left:455px;top:656px;width:102px;height:19px;background:#fff;border:1px solid;border-color:#a0a0a0 #fff #fff #a0a0a0;box-shadow:inset 1px 1px #696969,inset -1px -1px #e3e3e3"></div>
<div class="b" style="left:539px;top:658px;width:16px;height:8px;background:#f0f0f0;border:1px solid;border-color:#e3e3e3 #696969 #696969 #e3e3e3;box-shadow:inset 1px 1px #fff,inset -1px -1px #a0a0a0"></div>
<div class="b" style="left:539px;top:665px;width:16px;height:8px;background:#f0f0f0;border:1px solid;border-color:#e3e3e3 #696969 #696969 #e3e3e3;box-shadow:inset 1px 1px #fff,inset -1px -1px #a0a0a0"></div>
<svg class="b" style="left:545px;top:660px" width="5" height="11"><path d="M2.5 0.5L4.5 2.5H0.5Z" fill="#000"/><path d="M0.5 8.5H4.5L2.5 10.5Z" fill="#000"/></svg>
<div class="t" style="top:658.5px;font-size:12.5px;line-height:14px;color:#1a6e1a;font-weight:700;left:459.0px;width:80px;overflow:hidden;">17,8 dB</div>
<div class="t" style="top:684.0px;font-size:12px;line-height:14px;color:#000;font-weight:700;right:827.1px;">BER</div>
<div class="b" style="left:455px;top:682px;width:102px;height:19px;background:#fff;border:1px solid;border-color:#a0a0a0 #fff #fff #a0a0a0;box-shadow:inset 1px 1px #696969,inset -1px -1px #e3e3e3"></div>
<div class="b" style="left:539px;top:684px;width:16px;height:8px;background:#f0f0f0;border:1px solid;border-color:#e3e3e3 #696969 #696969 #e3e3e3;box-shadow:inset 1px 1px #fff,inset -1px -1px #a0a0a0"></div>
<div class="b" style="left:539px;top:691px;width:16px;height:8px;background:#f0f0f0;border:1px solid;border-color:#e3e3e3 #696969 #696969 #e3e3e3;box-shadow:inset 1px 1px #fff,inset -1px -1px #a0a0a0"></div>
<svg class="b" style="left:545px;top:686px" width="5" height="11"><path d="M2.5 0.5L4.5 2.5H0.5Z" fill="#000"/><path d="M0.5 8.5H4.5L2.5 10.5Z" fill="#000"/></svg>
<div class="t" style="top:684.5px;font-size:12.5px;line-height:14px;color:#ff0000;font-weight:700;left:459.0px;width:80px;overflow:hidden;">0,0000000</div>
<div class="t" style="top:709.0px;font-size:12px;line-height:14px;color:#000;font-weight:700;right:827.1px;">Bitrate</div>
<div class="b" style="left:455px;top:706px;width:102px;height:19px;background:#fff;border:1px solid;border-color:#a0a0a0 #fff #fff #a0a0a0;box-shadow:inset 1px 1px #696969,inset -1px -1px #e3e3e3"></div>
<div class="b" style="left:539px;top:708px;width:16px;height:8px;background:#f0f0f0;border:1px solid;border-color:#e3e3e3 #696969 #696969 #e3e3e3;box-shadow:inset 1px 1px #fff,inset -1px -1px #a0a0a0"></div>
<div class="b" style="left:539px;top:715px;width:16px;height:8px;background:#f0f0f0;border:1px solid;border-color:#e3e3e3 #696969 #696969 #e3e3e3;box-shadow:inset 1px 1px #fff,inset -1px -1px #a0a0a0"></div>
<svg class="b" style="left:545px;top:710px" width="5" height="11"><path d="M2.5 0.5L4.5 2.5H0.5Z" fill="#000"/><path d="M0.5 8.5H4.5L2.5 10.5Z" fill="#000"/></svg>
<div class="t" style="top:708.5px;font-size:12.5px;line-height:14px;color:#000;font-weight:700;left:459.0px;width:80px;overflow:hidden;">72,670 Mbit/s</div>
<div class="b" style="left:375px;top:734px;width:12px;height:12px;background:#fff;border:1px solid;border-color:#a0a0a0 #fff #fff #a0a0a0;box-shadow:inset 1px 1px #696969,inset -1px -1px #e3e3e3"></div>
<svg class="b" style="left:375px;top:734px" width="12" height="12"><path d="M3 5.5L5 7.5L9 3.5" stroke="#000" stroke-width="1.8" fill="none"/></svg>
<div class="t" style="top:732.8px;font-size:10.7px;line-height:14px;color:#000;left:392.4px;">Refresh signal info</div>
<div class="b" style="left:375px;top:758px;width:12px;height:12px;background:#fff;border:1px solid;border-color:#a0a0a0 #fff #fff #a0a0a0;box-shadow:inset 1px 1px #696969,inset -1px -1px #e3e3e3"></div>
<div class="t" style="top:756.9px;font-size:10.7px;line-height:14px;color:#000;left:392.4px;">Update modulation info</div>
<div class="t" style="top:781.0px;font-size:10.7px;line-height:14px;color:#000;left:408.2px;">Elapsed time: 0.878 sec</div>
<div class="t" style="top:635.0px;font-size:11.5px;line-height:14px;color:#000;font-weight:700;right:647.6px;">Frequency</div>
<div class="b" style="left:635px;top:632px;width:101px;height:19px;background:#fff;border:1px solid;border-color:#a0a0a0 #fff #fff #a0a0a0;box-shadow:inset 1px 1px #696969,inset -1px -1px #e3e3e3"></div>
<div class="b" style="left:718px;top:634px;width:16px;height:8px;background:#f0f0f0;border:1px solid;border-color:#e3e3e3 #696969 #696969 #e3e3e3;box-shadow:inset 1px 1px #fff,inset -1px -1px #a0a0a0"></div>
<div class="b" style="left:718px;top:641px;width:16px;height:8px;background:#f0f0f0;border:1px solid;border-color:#e3e3e3 #696969 #696969 #e3e3e3;box-shadow:inset 1px 1px #fff,inset -1px -1px #a0a0a0"></div>
<svg class="b" style="left:724px;top:636px" width="5" height="11"><path d="M2.5 0.5L4.5 2.5H0.5Z" fill="#000"/><path d="M0.5 8.5H4.5L2.5 10.5Z" fill="#000"/></svg>
<div class="t" style="top:634.5px;font-size:11.5px;line-height:14px;color:#000;font-weight:700;left:639.0px;width:80px;overflow:hidden;">10771,166 MHz</div>
<div class="t" style="top:659.0px;font-size:11.5px;line-height:14px;color:#000;font-weight:700;right:647.6px;">Symbol rate</div>
<div class="b" style="left:635px;top:656px;width:101px;height:19px;background:#fff;border:1px solid;border-color:#a0a0a0 #fff #fff #a0a0a0;box-shadow:inset 1px 1px #696969,inset -1px -1px #e3e3e3"></div>
<div class="b" style="left:718px;top:658px;width:16px;height:8px;background:#f0f0f0;border:1px solid;border-color:#e3e3e3 #696969 #696969 #e3e3e3;box-shadow:inset 1px 1px #fff,inset -1px -1px #a0a0a0"></div>
<div class="b" style="left:718px;top:665px;width:16px;height:8px;background:#f0f0f0;border:1px solid;border-color:#e3e3e3 #696969 #696969 #e3e3e3;box-shadow:inset 1px 1px #fff,inset -1px -1px #a0a0a0"></div>
<svg class="b" style="left:724px;top:660px" width="5" height="11"><path d="M2.5 0.5L4.5 2.5H0.5Z" fill="#000"/><path d="M0.5 8.5H4.5L2.5 10.5Z" fill="#000"/></svg>
<div class="t" style="top:658.5px;font-size:11.5px;line-height:14px;color:#000;font-weight:700;left:639.0px;width:80px;overflow:hidden;">30003 Ks</div>
<div class="t" style="top:684.0px;font-size:10.7px;line-height:14px;color:#000;right:647.6px;">Modulation</div>
<div class="b" style="left:635px;top:682px;width:101px;height:19px;background:#fff;border:1px solid;border-color:#a0a0a0 #fff #fff #a0a0a0;box-shadow:inset 1px 1px #696969,inset -1px -1px #e3e3e3"></div>
<div class="b" style="left:718px;top:684px;width:16px;height:15px;background:#f0f0f0;border:1px solid;border-color:#e3e3e3 #696969 #696969 #e3e3e3;box-shadow:inset 1px 1px #fff,inset -1px -1px #a0a0a0"></div>
<svg class="b" style="left:722.5px;top:689.5px" width="7" height="4"><path d="M0 0H7L3.5 4Z" fill="#000"/></svg>
<div class="t" style="top:684.5px;font-size:10.7px;line-height:14px;color:#000;left:639.0px;">DVB-S2/8PSK</div>
<div class="t" style="top:708.5px;font-size:10.7px;line-height:14px;color:#000;right:647.6px;">FEC</div>
<div class="b" style="left:635px;top:706px;width:101px;height:19px;background:#fff;border:1px solid;border-color:#a0a0a0 #fff #fff #a0a0a0;box-shadow:inset 1px 1px #696969,inset -1px -1px #e3e3e3"></div>
<div class="b" style="left:718px;top:708px;width:16px;height:15px;background:#f0f0f0;border:1px solid;border-color:#e3e3e3 #696969 #696969 #e3e3e3;box-shadow:inset 1px 1px #fff,inset -1px -1px #a0a0a0"></div>
<svg class="b" style="left:722.5px;top:713.5px" width="7" height="4"><path d="M0 0H7L3.5 4Z" fill="#000"/></svg>
<div class="t" style="top:708.5px;font-size:10.7px;line-height:14px;color:#000;left:639.0px;">5/6</div>
<div class="t" style="top:733.0px;font-size:10.7px;line-height:14px;color:#000;right:647.6px;">Spectrum</div>
<div class="b" style="left:635px;top:730px;width:101px;height:19px;background:#fff;border:1px solid;border-color:#a0a0a0 #fff #fff #a0a0a0;box-shadow:inset 1px 1px #696969,inset -1px -1px #e3e3e3"></div>
<div class="b" style="left:718px;top:732px;width:16px;height:15px;background:#f0f0f0;border:1px solid;border-color:#e3e3e3 #696969 #696969 #e3e3e3;box-shadow:inset 1px 1px #fff,inset -1px -1px #a0a0a0"></div>
<svg class="b" style="left:722.5px;top:737.5px" width="7" height="4"><path d="M0 0H7L3.5 4Z" fill="#000"/></svg>
<div class="t" style="top:732.5px;font-size:10.7px;line-height:14px;color:#000;left:639.0px;">Normal</div>
<div class="t" style="top:757.0px;font-size:10.7px;line-height:14px;color:#000;right:647.6px;">RollOff</div>
<div class="b" style="left:635px;top:754px;width:101px;height:19px;background:#fff;border:1px solid;border-color:#a0a0a0 #fff #fff #a0a0a0;box-shadow:inset 1px 1px #696969,inset -1px -1px #e3e3e3"></div>
<div class="b" style="left:718px;top:756px;width:16px;height:15px;background:#f0f0f0;border:1px solid;border-color:#e3e3e3 #696969 #696969 #e3e3e3;box-shadow:inset 1px 1px #fff,inset -1px -1px #a0a0a0"></div>
<svg class="b" style="left:722.5px;top:761.5px" width="7" height="4"><path d="M0 0H7L3.5 4Z" fill="#000"/></svg>
<div class="t" style="top:756.5px;font-size:10.7px;line-height:14px;color:#000;left:639.0px;">0.35</div>
<div class="t" style="top:781.0px;font-size:10.7px;line-height:14px;color:#000;right:647.6px;"><u>Carrier width</u></div>
<div class="b" style="left:635px;top:778px;width:101px;height:19px;background:#fff;border:1px solid;border-color:#a0a0a0 #fff #fff #a0a0a0;box-shadow:inset 1px 1px #696969,inset -1px -1px #e3e3e3"></div>
<div class="b" style="left:718px;top:780px;width:16px;height:8px;background:#f0f0f0;border:1px solid;border-color:#e3e3e3 #696969 #696969 #e3e3e3;box-shadow:inset 1px 1px #fff,inset -1px -1px #a0a0a0"></div>
<div class="b" style="left:718px;top:787px;width:16px;height:8px;background:#f0f0f0;border:1px solid;border-color:#e3e3e3 #696969 #696969 #e3e3e3;box-shadow:inset 1px 1px #fff,inset -1px -1px #a0a0a0"></div>
<svg class="b" style="left:724px;top:782px" width="5" height="11"><path d="M2.5 0.5L4.5 2.5H0.5Z" fill="#000"/><path d="M0.5 8.5H4.5L2.5 10.5Z" fill="#000"/></svg>
<div class="t" style="top:780.5px;font-size:10.7px;line-height:14px;color:#000;left:639.0px;font-style:italic;">40,504 MHz</div>
<div class="t" style="top:635.0px;font-size:10.7px;line-height:14px;color:#000;right:474.3px;">Pilot</div>
<div class="b" style="left:808px;top:632px;width:95px;height:19px;background:#fff;border:1px solid;border-color:#a0a0a0 #fff #fff #a0a0a0;box-shadow:inset 1px 1px #696969,inset -1px -1px #e3e3e3"></div>
<div class="b" style="left:885px;top:634px;width:16px;height:15px;background:#f0f0f0;border:1px solid;border-color:#e3e3e3 #696969 #696969 #e3e3e3;box-shadow:inset 1px 1px #fff,inset -1px -1px #a0a0a0"></div>
<svg class="b" style="left:889.5px;top:639.5px" width="7" height="4"><path d="M0 0H7L3.5 4Z" fill="#000"/></svg>
<div class="t" style="top:634.5px;font-size:10.7px;line-height:14px;color:#000;left:812.0px;">ON</div>
<div class="t" style="top:659.0px;font-size:10.7px;line-height:14px;color:#000;right:474.3px;">Frame type</div>
<div class="b" style="left:808px;top:656px;width:95px;height:19px;background:#fff;border:1px solid;border-color:#a0a0a0 #fff #fff #a0a0a0;box-shadow:inset 1px 1px #696969,inset -1px -1px #e3e3e3"></div>
<div class="b" style="left:885px;top:658px;width:16px;height:15px;background:#f0f0f0;border:1px solid;border-color:#e3e3e3 #696969 #696969 #e3e3e3;box-shadow:inset 1px 1px #fff,inset -1px -1px #a0a0a0"></div>
<svg class="b" style="left:889.5px;top:663.5px" width="7" height="4"><path d="M0 0H7L3.5 4Z" fill="#000"/></svg>
<div class="t" style="top:658.5px;font-size:10.7px;line-height:14px;color:#000;left:812.0px;">Long</div>
<div class="t" style="top:684.0px;font-size:10.7px;line-height:14px;color:#000;right:474.3px;">Coding mode</div>
<div class="b" style="left:808px;top:682px;width:95px;height:19px;background:#fff;border:1px solid;border-color:#a0a0a0 #fff #fff #a0a0a0;box-shadow:inset 1px 1px #696969,inset -1px -1px #e3e3e3"></div>
<div class="b" style="left:885px;top:684px;width:16px;height:15px;background:#f0f0f0;border:1px solid;border-color:#e3e3e3 #696969 #696969 #e3e3e3;box-shadow:inset 1px 1px #fff,inset -1px -1px #a0a0a0"></div>
<svg class="b" style="left:889.5px;top:689.5px" width="7" height="4"><path d="M0 0H7L3.5 4Z" fill="#000"/></svg>
<div class="t" style="top:684.5px;font-size:10.7px;line-height:14px;color:#000;left:812.0px;">CCM</div>
<div class="t" style="top:708.5px;font-size:10.7px;line-height:14px;color:#000;right:474.3px;">Stream type</div>
<div class="b" style="left:808px;top:706px;width:95px;height:19px;background:#fff;border:1px solid;border-color:#a0a0a0 #fff #fff #a0a0a0;box-shadow:inset 1px 1px #696969,inset -1px -1px #e3e3e3"></div>
<div class="b" style="left:885px;top:708px;width:16px;height:15px;background:#f0f0f0;border:1px solid;border-color:#e3e3e3 #696969 #696969 #e3e3e3;box-shadow:inset 1px 1px #fff,inset -1px -1px #a0a0a0"></div>
<svg class="b" style="left:889.5px;top:713.5px" width="7" height="4"><path d="M0 0H7L3.5 4Z" fill="#000"/></svg>
<div class="t" style="top:708.5px;font-size:10.7px;line-height:14px;color:#000;left:812.0px;">Transport</div>
<div class="t" style="top:733.0px;font-size:10.7px;line-height:14px;color:#000;right:474.3px;">Input stream</div>
<div class="b" style="left:808px;top:730px;width:95px;height:19px;background:#fff;border:1px solid;border-color:#a0a0a0 #fff #fff #a0a0a0;box-shadow:inset 1px 1px #696969,inset -1px -1px #e3e3e3"></div>
<div class="b" style="left:885px;top:732px;width:16px;height:15px;background:#f0f0f0;border:1px solid;border-color:#e3e3e3 #696969 #696969 #e3e3e3;box-shadow:inset 1px 1px #fff,inset -1px -1px #a0a0a0"></div>
<svg class="b" style="left:889.5px;top:737.5px" width="7" height="4"><path d="M0 0H7L3.5 4Z" fill="#000"/></svg>
<div class="t" style="top:732.5px;font-size:10.7px;line-height:14px;color:#000;left:812.0px;">Single</div>
<div class="t" style="top:757.0px;font-size:10.7px;line-height:14px;color:#000;right:474.3px;">ISSYI</div>
<div class="b" style="left:808px;top:754px;width:95px;height:19px;background:#fff;border:1px solid;border-color:#a0a0a0 #fff #fff #a0a0a0;box-shadow:inset 1px 1px #696969,inset -1px -1px #e3e3e3"></div>
<div class="b" style="left:885px;top:756px;width:16px;height:15px;background:#f0f0f0;border:1px solid;border-color:#e3e3e3 #696969 #696969 #e3e3e3;box-shadow:inset 1px 1px #fff,inset -1px -1px #a0a0a0"></div>
<svg class="b" style="left:889.5px;top:761.5px" width="7" height="4"><path d="M0 0H7L3.5 4Z" fill="#000"/></svg>
<div class="t" style="top:756.5px;font-size:10.7px;line-height:14px;color:#000;left:812.0px;">OFF</div>
<div class="t" style="top:781.0px;font-size:10.7px;line-height:14px;color:#000;right:474.3px;">NPD</div>
<div class="b" style="left:808px;top:778px;width:95px;height:19px;background:#fff;border:1px solid;border-color:#a0a0a0 #fff #fff #a0a0a0;box-shadow:inset 1px 1px #696969,inset -1px -1px #e3e3e3"></div>
<div class="b" style="left:885px;top:780px;width:16px;height:15px;background:#f0f0f0;border:1px solid;border-color:#e3e3e3 #696969 #696969 #e3e3e3;box-shadow:inset 1px 1px #fff,inset -1px -1px #a0a0a0"></div>
<svg class="b" style="left:889.5px;top:785.5px" width="7" height="4"><path d="M0 0H7L3.5 4Z" fill="#000"/></svg>
<div class="t" style="top:780.5px;font-size:10.7px;line-height:14px;color:#000;left:812.0px;">OFF</div>
<div class="b" style="left:0px;top:972px;width:1278px;height:47px;background:linear-gradient(90deg,#e9eef8,#e1e8f5 50%,#e8edf7);border-top:1px solid #c9ced8"></div>
<svg class="b" style="left:18px;top:988px" width="26" height="20" viewBox="0 0 26 20"><path d="M5 18Q0 18 1 13Q2 9 7 10Q9 5 14 6Q19 7 19 11Q24 11 24 15Q24 18 20 18Z" fill="#8fb5e8" stroke="#6d95d0" stroke-width="0.8"/><rect x="12" y="3" width="6" height="2" fill="#f08020"/></svg>
<div class="b" style="left:27px;top:977px;width:22px;height:19px;background:#fff;border-radius:9px"></div>
<div class="t" style="top:980.0px;font-size:11px;line-height:14px;color:#222;left:38.0px;transform:translateX(-50%);">22°</div>
<svg class="b" style="left:243px;top:984px" width="24" height="24" viewBox="0 0 24 24"><defs><linearGradient id="wl" x1="0" y1="0" x2="1" y2="1"><stop offset="0" stop-color="#38b8f0"/><stop offset="1" stop-color="#0a6ad6"/></linearGradient></defs><path d="M0 0H11.3V11.3H0ZM12.7 0H24V11.3H12.7ZM0 12.7H11.3V24H0ZM12.7 12.7H24V24H12.7Z" fill="url(#wl)"/></svg>
<div class="b" style="left:280px;top:981px;width:218px;height:30px;background:#f4f6fa;border:1px solid #d8dde6;border-radius:15px"></div>
<svg class="b" style="left:291px;top:989px" width="14" height="15" viewBox="0 0 14 15"><circle cx="6" cy="6" r="4.8" fill="none" stroke="#222" stroke-width="1.6"/><path d="M9.5 9.5L13 13" stroke="#222" stroke-width="1.8"/></svg>
<div class="t" style="top:989.2px;font-size:13px;line-height:14px;color:#5f5f5f;left:316.0px;">Поиск</div>
<svg class="b" style="left:446px;top:985px" width="50" height="24" viewBox="0 0 50 24"><ellipse cx="25" cy="15" rx="24" ry="8" fill="#47b5e0"/><path d="M4 13Q12 2 22 6Q30 0 44 9Q38 17 24 17Q12 18 4 13Z" fill="#3c9a5a"/><path d="M8 14Q20 10 30 14Q22 18 10 17Z" fill="#e8d8a0"/><ellipse cx="10" cy="4" rx="6" ry="2" fill="#e0b0d8"/></svg>
<svg class="b" style="left:511px;top:985px" width="24" height="23" viewBox="0 0 24 23"><rect x="8" y="0.5" width="15" height="14" fill="#f4f4f4" stroke="#bbb"/><rect x="1" y="8" width="15" height="14" fill="#1e1e1e"/><rect x="8" y="8" width="8" height="7" fill="#d0d0d0"/></svg>
<svg class="b" style="left:554px;top:985px" width="25" height="23" viewBox="0 0 25 23"><defs><linearGradient id="cp1" x1="0" y1="0" x2="0" y2="1"><stop offset="0" stop-color="#1fa2ff"/><stop offset="1" stop-color="#2a5cf0"/></linearGradient><linearGradient id="cp2" x1="0" y1="0" x2="1" y2="1"><stop offset="0" stop-color="#e84fb8"/><stop offset="1" stop-color="#ff9a3a"/></linearGradient></defs><path d="M8 1H16Q19 1 18 4L14 20Q13 22 10 22H4Q1 22 2 19L5 5Q6 1 8 1Z" fill="url(#cp1)"/><path d="M12 1H20Q24 1 23 5L20 18Q19 22 16 22H8Q12 21 13 17L16 5Q17 2 12 1Z" fill="url(#cp2)" opacity="0.9"/><path d="M2 14Q6 12 9 15L7 21Q3 22 2 19Z" fill="#5ad06a" opacity="0.85"/></svg>
<svg class="b" style="left:598px;top:985px" width="26" height="23" viewBox="0 0 26 23"><path d="M1 3Q1 1 3 1H9L12 4H23Q25 4 25 6V20Q25 22 23 22H3Q1 22 1 20Z" fill="#f5c242"/><rect x="1" y="7" width="24" height="15" rx="1" fill="#ffd35a"/><rect x="7" y="15" width="12" height="7" fill="#1f7ae0"/></svg>
<svg class="b" style="left:643px;top:985px" width="25" height="25" viewBox="0 0 25 25"><rect x="0" y="0" width="14" height="14" rx="2" fill="#fff" stroke="#ddd"/><path d="M2 2H11V11" fill="none" stroke="#e23030" stroke-width="2.5" stroke-dasharray="2.5 1.5"/><path d="M10 10L22 19M14 20L22 10" stroke="#3a8ad8" stroke-width="1.5"/><circle cx="13" cy="21" r="2" fill="none" stroke="#3a8ad8" stroke-width="1.3"/><circle cx="22" cy="19" r="2" fill="none" stroke="#3a8ad8" stroke-width="1.3"/></svg>
<div class="b" style="left:652px;top:1013px;width:6px;height:2px;background:#888;border-radius:1px"></div>
<svg class="b" style="left:687px;top:984px" width="25" height="25" viewBox="0 0 25 25"><circle cx="12.5" cy="12.5" r="12" fill="#0866ff"/><path d="M14 25V15H17.3L17.8 11.3H14V9Q14 7.3 15.8 7.3H18V4Q16.5 3.8 15 3.8Q10.3 3.8 10.3 8.6V11.3H7V15H10.3V25Z" fill="#fff"/></svg>
<svg class="b" style="left:731px;top:990px" width="25" height="11" viewBox="0 0 25 11"><rect x="0.5" y="0.5" width="24" height="10" fill="#cfe0f5" stroke="#8aa8d0"/><path d="M3 3H22M3 5.5H22M3 8H22" stroke="#fff" stroke-width="1" stroke-dasharray="1.5 1"/></svg>
<svg class="b" style="left:775px;top:984px" width="25" height="25" viewBox="0 0 25 25"><path d="M3 6Q5 18 17 20Q22 10 12 4Q7 1 3 6Z" fill="#d8d0f0" stroke="#3a2ab0" stroke-width="1.5"/><path d="M9 13L20 3M6 24L11 17L16 24" stroke="#3a2ab0" stroke-width="1.6" fill="none"/><path d="M5 9L15 19M8 7L18 16" stroke="#3a2ab0" stroke-width="0.8"/></svg>
<svg class="b" style="left:819px;top:984px" width="25" height="25" viewBox="0 0 25 25"><defs><linearGradient id="ed" x1="0" y1="0" x2="1" y2="1"><stop offset="0" stop-color="#2ec66a"/><stop offset="0.5" stop-color="#1a9ad8"/><stop offset="1" stop-color="#0a60c0"/></linearGradient></defs><path d="M12.5 1Q23 1 24 11Q24 16 18 16H9Q10 21 16 22Q20 22 22 21Q18 25 12 24Q1 23 1 12Q2 1 12.5 1Z" fill="url(#ed)"/><circle cx="7" cy="19" r="5" fill="#a8a8a8"/><circle cx="7" cy="17.5" r="1.8" fill="#eee"/><path d="M3.5 22Q7 19 10.5 22" fill="#eee"/></svg>
<svg class="b" style="left:863px;top:984px" width="24" height="25" viewBox="0 0 24 25"><path d="M7 6V3Q7 1 9 1H15Q17 1 17 3V6" fill="none" stroke="#1aa8e8" stroke-width="1.6"/><rect x="0.5" y="5" width="23" height="19" rx="2" fill="#1a4c8a"/><rect x="6" y="10" width="5" height="5" fill="#f25022"/><rect x="12" y="10" width="5" height="5" fill="#7fba00"/><rect x="6" y="16" width="5" height="5" fill="#00a4ef"/><rect x="12" y="16" width="5" height="5" fill="#ffb900"/></svg>
<svg class="b" style="left:907px;top:984px" width="24" height="25" viewBox="0 0 24 25"><circle cx="10" cy="11" r="9.5" fill="#1a70c8"/><path d="M3 8Q7 4 10 7T13 12Q11 16 7 17Q4 13 3 8Z" fill="#3aa83a"/><circle cx="15" cy="10" r="6" fill="#cde6ff" fill-opacity="0.8" stroke="#1a5aa0" stroke-width="1.6"/><path d="M11 15L4 23" stroke="#e0902a" stroke-width="2.5"/></svg>
<div class="b" style="left:916px;top:1013px;width:6px;height:2px;background:#888;border-radius:1px"></div>
<svg class="b" style="left:1009px;top:992px" width="12" height="8" viewBox="0 0 12 8"><path d="M1 7L6 1.5L11 7" fill="none" stroke="#222" stroke-width="1.3"/></svg>
<svg class="b" style="left:1039px;top:987px" width="15" height="17" viewBox="0 0 15 17"><ellipse cx="7.5" cy="3.5" rx="6" ry="2.5" fill="none" stroke="#889" stroke-width="1.1"/><circle cx="7.5" cy="10" r="6.2" fill="none" stroke="#889" stroke-width="1.1"/><circle cx="7.5" cy="10" r="3.5" fill="none" stroke="#889" stroke-width="1.1"/></svg>
<svg class="b" style="left:1071px;top:990px" width="16" height="11" viewBox="0 0 16 11"><rect x="0.5" y="0.5" width="15" height="10" rx="1.5" fill="none" stroke="#222" stroke-width="1.2"/><path d="M3 3.5H13M3 5.8H13" stroke="#222" stroke-width="1" stroke-dasharray="1 1"/><path d="M4 8H12" stroke="#222" stroke-width="1"/></svg>
<div class="t" style="top:989.5px;font-size:11.5px;line-height:14px;color:#111;left:1107.2px;">РУС</div>
<svg class="b" style="left:1146px;top:989px" width="17" height="12" viewBox="0 0 17 12"><path d="M1 4.5Q8.5 -2 16 4.5M3.5 7Q8.5 2.5 13.5 7M6 9.3Q8.5 7.3 11 9.3" fill="none" stroke="#222" stroke-width="1.4"/><circle cx="8.5" cy="11" r="1.2" fill="#222"/></svg>
<svg class="b" style="left:1171px;top:989px" width="14" height="12" viewBox="0 0 14 12"><path d="M1 4H4L8 1V11L4 8H1Z" fill="none" stroke="#222" stroke-width="1.1"/><path d="M10 3.5Q12 6 10 8.5M11.5 2Q14.5 6 11.5 10" fill="none" stroke="#222" stroke-width="1"/></svg>
<div class="t" style="top:980.0px;font-size:11.5px;line-height:14px;color:#111;right:20.0px;">14:51</div>
<div class="t" style="top:996.8px;font-size:11.5px;line-height:14px;color:#111;right:18.7px;">19.06.2025</div>
<div class="b" style="left:1180px;top:978px;width:88px;height:30px;background:rgba(255,255,255,0.35)"></div>
<div class="t" style="left:1183px;top:983px;font-size:21px;line-height:22px;font-weight:700;color:rgba(255,255,255,0.92)">PRO</div>
<svg class="b" style="left:1226px;top:983px" width="30" height="22" viewBox="0 0 30 22"><rect x="0" y="0" width="30" height="22" fill="#2a8ae8"/><path d="M0 22L12 0H30V8L10 22Z" fill="#f0d010"/><path d="M20 22L30 10V22Z" fill="#e82020"/><path d="M0 0H10L0 18Z" fill="#40b040"/></svg>
<div class="t" style="left:1229px;top:983px;font-size:21px;line-height:22px;font-weight:700;color:#fff;text-shadow:0 0 1px #000">TV</div>
</body></html>
